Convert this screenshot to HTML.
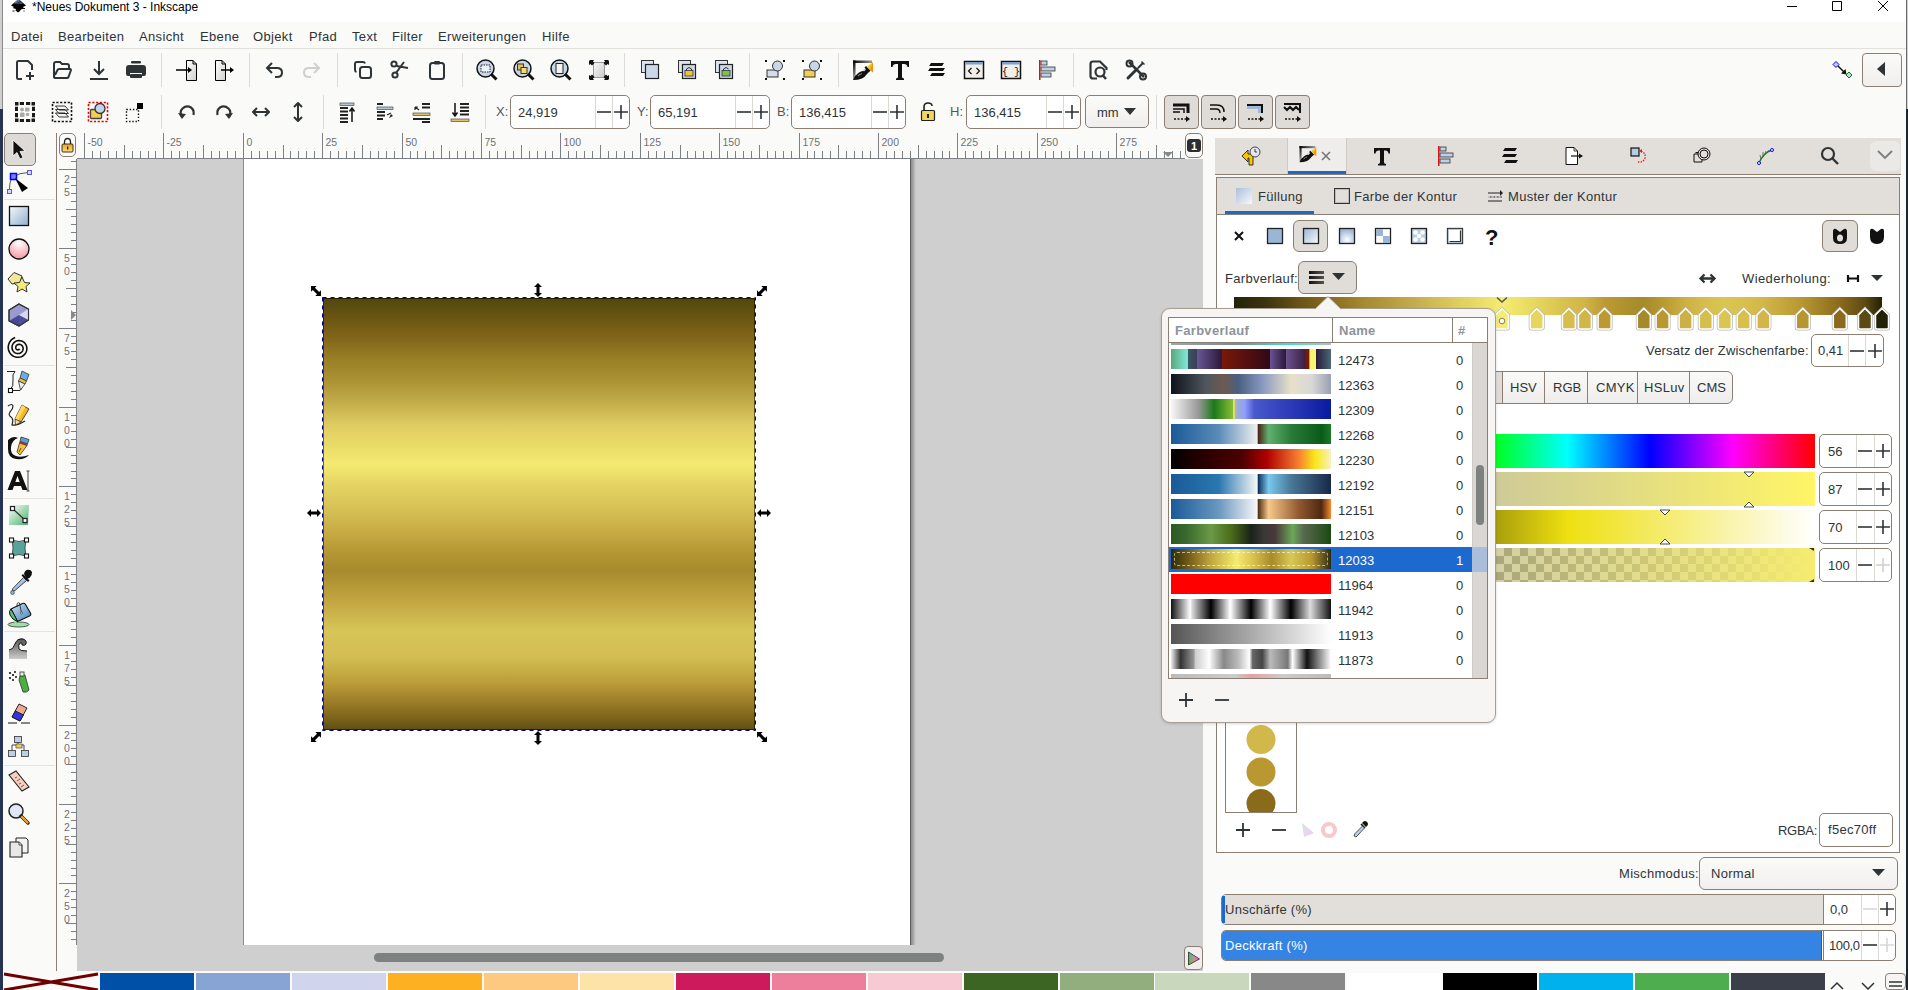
<!DOCTYPE html><html><head><meta charset="utf-8"><style>
html,body{margin:0;padding:0;width:1908px;height:990px;overflow:hidden;background:#fafaf9;font-family:"Liberation Sans", sans-serif;}
body{position:relative}
svg{overflow:visible}
</style></head><body>
<div style="position:absolute;left:0px;top:0px;width:1908px;height:22px;background:#ffffff"></div>
<svg style="position:absolute;left:10px;top:-2px;" width="18" height="17" viewBox="0 0 18 17"><defs><linearGradient id="ik" x1="0" y1="0" x2="1" y2="1"><stop offset="0" stop-color="#fff"/><stop offset="0.6" stop-color="#20385e"/><stop offset="1" stop-color="#5a7ab0"/></linearGradient></defs><path d="M8.5 1L1 7.5L4 9L2.5 10L6 11L5.5 12.5L8 14.5L10 13L11 11.5L14 10.5L13 9L16 7.5Z" fill="#000"/><path d="M8.5 1L4 5.5Q8 7 13 5.5Z" fill="url(#ik)"/><rect x="2.5" y="12.5" width="2" height="1" fill="#111"/><rect x="13" y="10" width="2" height="1" fill="#111"/><rect x="13.5" y="12.5" width="1" height="1" fill="#111"/></svg>
<div style="position:absolute;left:32px;top:0px;font-size:12px;line-height:14px;color:#000;white-space:nowrap;">*Neues Dokument 3 - Inkscape</div>
<svg style="position:absolute;left:1786px;top:0px;" width="120" height="20" viewBox="0 0 120 20"><path d="M1 6.5H11" stroke="#000" stroke-width="1"/><path d="M46.5 1.5h9v9h-9z" fill="none" stroke="#000" stroke-width="1"/><path d="M92 1L102 11M102 1L92 11" stroke="#000" stroke-width="1"/></svg>
<div style="position:absolute;left:3px;top:48px;width:1903px;height:1px;background:#e4e1dd"></div>
<div style="position:absolute;left:11px;top:29px;font-size:13px;line-height:15px;color:#2e3436;white-space:nowrap;letter-spacing:0.35px">Datei</div>
<div style="position:absolute;left:58px;top:29px;font-size:13px;line-height:15px;color:#2e3436;white-space:nowrap;letter-spacing:0.35px">Bearbeiten</div>
<div style="position:absolute;left:139px;top:29px;font-size:13px;line-height:15px;color:#2e3436;white-space:nowrap;letter-spacing:0.35px">Ansicht</div>
<div style="position:absolute;left:200px;top:29px;font-size:13px;line-height:15px;color:#2e3436;white-space:nowrap;letter-spacing:0.35px">Ebene</div>
<div style="position:absolute;left:253px;top:29px;font-size:13px;line-height:15px;color:#2e3436;white-space:nowrap;letter-spacing:0.35px">Objekt</div>
<div style="position:absolute;left:309px;top:29px;font-size:13px;line-height:15px;color:#2e3436;white-space:nowrap;letter-spacing:0.35px">Pfad</div>
<div style="position:absolute;left:352px;top:29px;font-size:13px;line-height:15px;color:#2e3436;white-space:nowrap;letter-spacing:0.35px">Text</div>
<div style="position:absolute;left:392px;top:29px;font-size:13px;line-height:15px;color:#2e3436;white-space:nowrap;letter-spacing:0.35px">Filter</div>
<div style="position:absolute;left:438px;top:29px;font-size:13px;line-height:15px;color:#2e3436;white-space:nowrap;letter-spacing:0.35px">Erweiterungen</div>
<div style="position:absolute;left:542px;top:29px;font-size:13px;line-height:15px;color:#2e3436;white-space:nowrap;letter-spacing:0.35px">Hilfe</div>
<svg style="position:absolute;left:13.0px;top:58.0px;" width="24" height="24" viewBox="0 0 24 24"><path d="M9 21H5.5Q4 21 4 19.5V4.5Q4 3 5.5 3H15L19 7V12" fill="none" stroke="#2e3436" stroke-width="2" stroke-linejoin="round"/><path d="M17 14V22M13 18H21" fill="none" stroke="#2e3436" stroke-width="2"/></svg>
<svg style="position:absolute;left:50.0px;top:58.0px;" width="24" height="24" viewBox="0 0 24 24"><path d="M4 19V6Q4 4 6 4H10L12 6H17Q19 6 19 8V10" fill="none" stroke="#2e3436" stroke-width="2"/><path d="M4 19Q4 20 6 20H17Q18 20 18.5 19L21 12Q21 11 20 11H9Q8 11 7.5 12L5 17" fill="none" stroke="#2e3436" stroke-width="2" stroke-linejoin="round"/></svg>
<svg style="position:absolute;left:87.0px;top:58.0px;" width="24" height="24" viewBox="0 0 24 24"><path d="M12 3V16M7 11L12 16L17 11" fill="none" stroke="#2e3436" stroke-width="2"/><path d="M3 21H21" fill="none" stroke="#2e3436" stroke-width="2"/></svg>
<svg style="position:absolute;left:124.0px;top:58.0px;" width="24" height="24" viewBox="0 0 24 24"><rect x="7" y="3" width="10" height="2.5" rx="1" fill="#2e3436"/><path d="M5 7H19Q22 7 22 10V16Q22 18 20 18H18V15H6V18H4Q2 18 2 16V10Q2 7 5 7Z" fill="#2e3436"/><rect x="6" y="16" width="12" height="4" rx="1" fill="#2e3436"/></svg>
<div style="position:absolute;left:161px;top:53px;width:1px;height:34px;background:#dedbd7"></div>
<svg style="position:absolute;left:175.0px;top:58.0px;" width="24" height="24" viewBox="0 0 24 24"><defs><linearGradient id="pg1" x1="0" y1="0" x2="1" y2="1"><stop offset="0" stop-color="#fff"/><stop offset="1" stop-color="#d0d0cc"/></linearGradient></defs><path d="M11.5 2.5H18L21.5 6V22.5H11.5Z" fill="url(#pg1)" stroke="#000" stroke-width="1"/><path d="M18 2.5V6H21.5" fill="none" stroke="#000" stroke-width="1"/><path d="M1 12H14" stroke="#000" stroke-width="1.5"/><path d="M13 9L17 12L13 15Z" fill="#000"/></svg>
<svg style="position:absolute;left:212.0px;top:58.0px;" width="24" height="24" viewBox="0 0 24 24"><path d="M3.5 2.5H10L13.5 6V22.5H3.5Z" fill="url(#pg1)" stroke="#000" stroke-width="1"/><path d="M10 2.5V6H13.5" fill="none" stroke="#000" stroke-width="1"/><path d="M9 12H19" stroke="#000" stroke-width="1.5"/><path d="M18 9L22 12L18 15Z" fill="#000"/></svg>
<div style="position:absolute;left:249px;top:53px;width:1px;height:34px;background:#dedbd7"></div>
<svg style="position:absolute;left:263.0px;top:58.0px;" width="24" height="24" viewBox="0 0 24 24"><path d="M5 10H14Q19 10 19 14.5Q19 19 14 19H12" fill="none" stroke="#2e3436" stroke-width="2"/><path d="M9 5L4 10L9 15" fill="none" stroke="#2e3436" stroke-width="2"/></svg>
<svg style="position:absolute;left:299.0px;top:58.0px;" width="24" height="24" viewBox="0 0 24 24"><path d="M19 10H10Q5 10 5 14.5Q5 19 10 19H12" fill="none" stroke="#cfd0ce" stroke-width="2"/><path d="M15 5L20 10L15 15" fill="none" stroke="#cfd0ce" stroke-width="2"/></svg>
<div style="position:absolute;left:337px;top:53px;width:1px;height:34px;background:#dedbd7"></div>
<svg style="position:absolute;left:351.0px;top:58.0px;" width="24" height="24" viewBox="0 0 24 24"><rect x="9" y="9" width="11" height="11" rx="2.5" fill="none" stroke="#2e3436" stroke-width="2"/><path d="M14 5.5Q13.5 4 12 4H6Q4 4 4 6V12Q4 13.5 5.5 14" fill="none" stroke="#2e3436" stroke-width="2"/></svg>
<svg style="position:absolute;left:387.0px;top:58.0px;" width="24" height="24" viewBox="0 0 24 24"><circle cx="8" cy="17" r="2.6" fill="none" stroke="#2e3436" stroke-width="2"/><circle cx="7" cy="6" r="2.6" fill="none" stroke="#2e3436" stroke-width="2"/><path d="M9 15L17 4M9.5 8L21 10" fill="none" stroke="#2e3436" stroke-width="2"/></svg>
<svg style="position:absolute;left:425.0px;top:58.0px;" width="24" height="24" viewBox="0 0 24 24"><rect x="5" y="5" width="14" height="16" rx="2.5" fill="none" stroke="#2e3436" stroke-width="2"/><rect x="9" y="3" width="6" height="3.5" rx="1" fill="#2e3436"/></svg>
<div style="position:absolute;left:462px;top:53px;width:1px;height:34px;background:#dedbd7"></div>
<svg style="position:absolute;left:475.0px;top:58.0px;" width="24" height="24" viewBox="0 0 24 24"><circle cx="10.5" cy="10.5" r="8.5" fill="#c9d6e6" stroke="#111" stroke-width="1.5"/><rect x="6" y="7" width="9" height="7" fill="#eef2f7" stroke="#222" stroke-width="1" stroke-dasharray="1.5 1"/><path d="M16 16L21.5 21.5" stroke="#111" stroke-width="3"/></svg>
<svg style="position:absolute;left:512.0px;top:58.0px;" width="24" height="24" viewBox="0 0 24 24"><circle cx="10.5" cy="10.5" r="8.5" fill="#c9d6e6" stroke="#111" stroke-width="1.5"/><rect x="5.5" y="6" width="6" height="6" fill="#e6c25a" stroke="#333" stroke-width="1"/><rect x="9" y="9.5" width="6" height="6" fill="#f2dc6c" stroke="#333" stroke-width="1"/><path d="M16 16L21.5 21.5" stroke="#111" stroke-width="3"/></svg>
<svg style="position:absolute;left:549.0px;top:58.0px;" width="24" height="24" viewBox="0 0 24 24"><circle cx="10.5" cy="10.5" r="8.5" fill="#c9d6e6" stroke="#111" stroke-width="1.5"/><rect x="7" y="5.5" width="7" height="10" fill="#f4f4f4" stroke="#222" stroke-width="1"/><path d="M16 16L21.5 21.5" stroke="#111" stroke-width="3"/></svg>
<svg style="position:absolute;left:587.0px;top:58.0px;" width="24" height="24" viewBox="0 0 24 24"><defs><linearGradient id="zp" x1="0" y1="0" x2="1" y2="1"><stop offset="0" stop-color="#fafafa"/><stop offset="1" stop-color="#c8c8c8"/></linearGradient></defs><rect x="6.5" y="4.5" width="11" height="15" fill="url(#zp)" stroke="#999" stroke-width="1"/><path d="M3 2H7L6 3.5L7.5 5L5 7.5L3.5 6L2 7V3Z" fill="#111"/><path d="M21 2H17L18 3.5L16.5 5L19 7.5L20.5 6L22 7V3Z" fill="#111"/><path d="M3 22H7L6 20.5L7.5 19L5 16.5L3.5 18L2 17V21Z" fill="#111"/><path d="M21 22H17L18 20.5L16.5 19L19 16.5L20.5 18L22 17V21Z" fill="#111"/></svg>
<div style="position:absolute;left:624px;top:53px;width:1px;height:34px;background:#dedbd7"></div>
<svg style="position:absolute;left:638.0px;top:58.0px;" width="24" height="24" viewBox="0 0 24 24"><rect x="3.5" y="2.5" width="12" height="12" fill="#dbe4ef" stroke="#333" stroke-width="1"/><rect x="7.5" y="6.5" width="13" height="14" fill="#cad8ea" stroke="#222" stroke-width="1.2"/></svg>
<svg style="position:absolute;left:675.0px;top:58.0px;" width="24" height="24" viewBox="0 0 24 24"><rect x="3.5" y="2.5" width="12" height="12" fill="#dbe4ef" stroke="#333" stroke-width="1"/><rect x="7.5" y="6.5" width="13" height="14" fill="#cad8ea" stroke="#222" stroke-width="1.2"/><rect x="10" y="12.5" width="8" height="5.5" fill="#f4c430" stroke="#333" stroke-width="0.8"/><path d="M11.5 12.5V11Q14 8 16.5 11V12.5" fill="none" stroke="#333" stroke-width="1"/></svg>
<svg style="position:absolute;left:712.0px;top:58.0px;" width="24" height="24" viewBox="0 0 24 24"><rect x="3.5" y="2.5" width="12" height="12" fill="#dbe4ef" stroke="#333" stroke-width="1"/><rect x="7.5" y="6.5" width="13" height="14" fill="#cad8ea" stroke="#222" stroke-width="1.2"/><rect x="10" y="12.5" width="8" height="5.5" fill="#7fbf4e" stroke="#333" stroke-width="0.8"/><path d="M11.5 12.5V11Q14 8 16.5 11" fill="none" stroke="#333" stroke-width="1"/></svg>
<div style="position:absolute;left:749px;top:53px;width:1px;height:34px;background:#dedbd7"></div>
<svg style="position:absolute;left:763.0px;top:58.0px;" width="24" height="24" viewBox="0 0 24 24"><path d="M2 2h2v2H2zM20 2h2v2h-2zM2 20h2v2H2zM20 20h2v2h-2z" fill="#111"/><rect x="4" y="12" width="11" height="7" fill="#d4deea" stroke="#333" stroke-width="1"/><circle cx="14.5" cy="8" r="5" fill="#c9d6e6" stroke="#333" stroke-width="1"/></svg>
<svg style="position:absolute;left:800.0px;top:58.0px;" width="24" height="24" viewBox="0 0 24 24"><path d="M2 2h2v2H2zM20 2h2v2h-2zM2 20h2v2H2zM20 20h2v2h-2z" fill="#111"/><rect x="4" y="12" width="11" height="7" fill="#f1cf52" stroke="#333" stroke-width="1"/><circle cx="14.5" cy="8" r="5" fill="#c9d6e6" stroke="#333" stroke-width="1"/></svg>
<div style="position:absolute;left:838px;top:53px;width:1px;height:34px;background:#dedbd7"></div>
<svg style="position:absolute;left:850.0px;top:58.0px;" width="24" height="24" viewBox="0 0 24 24"><defs><linearGradient id="fsA" x1="0" y1="0" x2="1" y2="0"><stop offset="0" stop-color="#000"/><stop offset="1" stop-color="#999"/></linearGradient><linearGradient id="fsB" x1="0" y1="0" x2="0" y2="1"><stop offset="0" stop-color="#000"/><stop offset="1" stop-color="#aaa"/></linearGradient></defs><rect x="3" y="2.5" width="19" height="2.5" fill="url(#fsA)"/><rect x="3" y="2.5" width="2.5" height="19" fill="url(#fsB)"/><path d="M3 22Q5 17 9 14.5Q11 13 13 13L16 10L19.5 13.5L16.5 16.5Q15 19 12 20.5Q8 22 3 22Z" fill="#111"/><path d="M8 18Q10 16 12 15.5" stroke="#888" stroke-width="1.2" fill="none"/><path d="M13.5 13L15.5 11" stroke="#ddd" stroke-width="1.2"/><path d="M16 8L20.5 12.5L19 14L14.5 9.5Z" fill="#111"/><path d="M17 9L23 4V14.5Z" fill="#f6c21e"/><path d="M23 4V14.5L20 12Z" fill="#f09010"/></svg>
<svg style="position:absolute;left:888.0px;top:58.0px;" width="24" height="24" viewBox="0 0 24 24"><path d="M3 3H21V9H19.5Q19 6 16 6H14V19Q14 20 16 20.5V22H8V20.5Q10 20 10 19V6H8Q5 6 4.5 9H3Z" fill="#111"/></svg>
<svg style="position:absolute;left:925.0px;top:58.0px;" width="24" height="24" viewBox="0 0 24 24"><path d="M6 5H19L17 8H4Z" fill="#111"/><path d="M5 10H20L18 13H3Z" fill="#111"/><path d="M7 15H20L18 18H5Z" fill="#111"/></svg>
<svg style="position:absolute;left:962.0px;top:58.0px;" width="24" height="24" viewBox="0 0 24 24"><rect x="2.5" y="3.5" width="19" height="17" fill="#f0efea" stroke="#111" stroke-width="1.5"/><rect x="3" y="4" width="18" height="2.5" fill="#7fa0c8"/><path d="M9.5 10L6.5 13L9.5 16M14.5 10L17.5 13L14.5 16" fill="none" stroke="#111" stroke-width="1.2"/></svg>
<svg style="position:absolute;left:999.0px;top:58.0px;" width="24" height="24" viewBox="0 0 24 24"><rect x="2.5" y="3.5" width="19" height="17" fill="#f0efea" stroke="#111" stroke-width="1.5"/><rect x="3" y="4" width="18" height="2.5" fill="#7fa0c8"/><text x="12" y="17" font-size="10" text-anchor="middle" font-family="Liberation Mono" fill="#111">{ }</text></svg>
<svg style="position:absolute;left:1036.0px;top:58.0px;" width="24" height="24" viewBox="0 0 24 24"><rect x="3" y="2" width="1.5" height="20" fill="#d11"/><rect x="5" y="3" width="6" height="4" fill="#bcd0e8" stroke="#333" stroke-width="0.8"/><rect x="5" y="9" width="14" height="4" fill="#bcd0e8" stroke="#333" stroke-width="0.8"/><rect x="5" y="15" width="10" height="4" fill="#bcd0e8" stroke="#333" stroke-width="0.8"/></svg>
<div style="position:absolute;left:1073px;top:53px;width:1px;height:34px;background:#dedbd7"></div>
<svg style="position:absolute;left:1087.0px;top:58.0px;" width="24" height="24" viewBox="0 0 24 24"><path d="M10 20.5H6Q3.5 20.5 3.5 18V6Q3.5 3.5 6 3.5H13L19.5 10V12" fill="none" stroke="#2e3436" stroke-width="2.2"/><circle cx="13" cy="14" r="4.5" fill="none" stroke="#2e3436" stroke-width="2.2"/><path d="M15.5 17L19 21" stroke="#2e3436" stroke-width="2.5"/></svg>
<svg style="position:absolute;left:1124.0px;top:58.0px;" width="24" height="24" viewBox="0 0 24 24"><path d="M4 20L13 11" stroke="#2e3436" stroke-width="3" stroke-linecap="round"/><path d="M14 10L19 5" stroke="#2e3436" stroke-width="2"/><path d="M18 3L21 6L20 7L17 4Z" fill="#2e3436"/><path d="M5 4L20 19" stroke="#2e3436" stroke-width="2.5"/><circle cx="5.5" cy="5.5" r="3" fill="none" stroke="#2e3436" stroke-width="2"/><circle cx="19" cy="18.5" r="3" fill="none" stroke="#2e3436" stroke-width="2"/></svg>
<svg style="position:absolute;left:1832.0px;top:59.0px;" width="22" height="22" viewBox="0 0 22 22"><path d="M4 2.5L7 5.5L4 8.5L1 5.5Z" fill="#c8c8ff" stroke="#00f" stroke-width="1"/><path d="M6 7L12 13" stroke="#111" stroke-width="1.4"/><path d="M14.5 15.5L9 14.5L13.5 10Z" fill="#111"/><path d="M17 13L20 16L17 19L14 16Z" fill="#c8c8ff" stroke="#080" stroke-width="1"/></svg>
<div style="position:absolute;left:1862px;top:53px;width:38px;height:32px;background:linear-gradient(#fafaf9,#f0efed);border:1px solid #8b7f73;border-radius:4px"></div>
<svg style="position:absolute;left:1874px;top:62px;" width="14" height="14" viewBox="0 0 14 14"><path d="M11 0L3 7L11 14Z" fill="#2e3436"/></svg>
<svg style="position:absolute;left:13.0px;top:100.0px;" width="24" height="24" viewBox="0 0 24 24"><path d="M2 2h3.5v3.5H2zM18.5 2H22v3.5h-3.5zM2 18.5h3.5V22H2zM18.5 18.5H22V22h-3.5z" fill="#1a1a1a"/><path d="M6.8 2h4.2v3H6.8zM13 2h4.2v3H13zM6.8 19h4.2v3H6.8zM13 19h4.2v3H13zM2 6.8h3V11H2zM2 13h3v4.2H2zM19 6.8h3V11h-3zM19 13h3v4.2h-3z" fill="#1a1a1a"/><circle cx="9" cy="9.5" r="2" fill="#aaa"/><rect x="12" y="7.5" width="4.5" height="4" rx="1" fill="#aaa"/><rect x="7" y="12.5" width="4.5" height="4.5" rx="1" fill="#aaa"/><circle cx="14.5" cy="14.5" r="1.8" fill="#aaa"/></svg>
<svg style="position:absolute;left:50.0px;top:100.0px;" width="24" height="24" viewBox="0 0 24 24"><rect x="2.5" y="2.5" width="19" height="19" fill="none" stroke="#111" stroke-width="1.6" stroke-dasharray="2.2 1.6"/><path d="M5.5 6H15L18.5 10H9ZM5.5 9.5H15L18.5 13.5H9ZM5.5 13H15L18.5 17H9Z" fill="#f4f4f4" stroke="#222" stroke-width="0.9" stroke-linejoin="round"/></svg>
<svg style="position:absolute;left:86.0px;top:100.0px;" width="24" height="24" viewBox="0 0 24 24"><rect x="2.5" y="2.5" width="19" height="19" fill="none" stroke="#e00" stroke-width="1.6" stroke-dasharray="2.2 1.6"/><rect x="4.5" y="9.5" width="11" height="9" rx="1" fill="#f2cf52" stroke="#444" stroke-width="1.3"/><circle cx="14" cy="8.5" r="5" fill="#c4d4e8" stroke="#333" stroke-width="1.3"/></svg>
<svg style="position:absolute;left:123.0px;top:100.0px;" width="24" height="24" viewBox="0 0 24 24"><rect x="3.5" y="9.5" width="12" height="12" fill="none" stroke="#111" stroke-width="1.4" stroke-dasharray="1.4 1.8"/><rect x="14" y="3" width="6" height="6" fill="#000"/></svg>
<div style="position:absolute;left:161px;top:95px;width:1px;height:34px;background:#dedbd7"></div>
<svg style="position:absolute;left:175.0px;top:100.0px;" width="24" height="24" viewBox="0 0 24 24"><path d="M7 17Q4 12 7.5 8.5Q11.5 5 16 7.5Q19.5 10 18.5 15" fill="none" stroke="#2e3436" stroke-width="2.2"/><path d="M3 13L7 19L11 14Z" fill="#2e3436"/></svg>
<svg style="position:absolute;left:212.0px;top:100.0px;" width="24" height="24" viewBox="0 0 24 24"><path d="M17 17Q20 12 16.5 8.5Q12.5 5 8 7.5Q4.5 10 5.5 15" fill="none" stroke="#2e3436" stroke-width="2.2"/><path d="M21 13L17 19L13 14Z" fill="#2e3436"/></svg>
<svg style="position:absolute;left:249.0px;top:100.0px;" width="24" height="24" viewBox="0 0 24 24"><path d="M4 12H20M8 8L4 12L8 16M16 8L20 12L16 16" fill="none" stroke="#2e3436" stroke-width="2" stroke-linejoin="round"/></svg>
<svg style="position:absolute;left:286.0px;top:100.0px;" width="24" height="24" viewBox="0 0 24 24"><path d="M12 3V21M8 7L12 3L16 7M8 17L12 21L16 17" fill="none" stroke="#2e3436" stroke-width="2" stroke-linejoin="round"/></svg>
<div style="position:absolute;left:323px;top:95px;width:1px;height:34px;background:#dedbd7"></div>
<svg style="position:absolute;left:337.0px;top:100.0px;" width="24" height="24" viewBox="0 0 24 24"><rect x="3" y="3" width="14" height="2.5" fill="#b8c8d8" stroke="#333" stroke-width="0.6"/><path d="M3 8H11M3 11.5H11M3 15H11M3 18.5H11M3 22H11" stroke="#222" stroke-width="2"/><path d="M15 22V9M12.5 11.5L15 8L17.5 11.5" fill="none" stroke="#111" stroke-width="1.5"/></svg>
<svg style="position:absolute;left:373.5px;top:100.0px;" width="24" height="24" viewBox="0 0 24 24"><path d="M3 4H9M3 15.5H11M3 19H9" stroke="#222" stroke-width="2"/><rect x="3" y="7" width="16" height="2.5" fill="#b8c8d8" stroke="#333" stroke-width="0.6"/><path d="M3 12H11" stroke="#222" stroke-width="2"/><path d="M15 18L17 14L19 16Z" fill="#222"/><path d="M13 15L17 13" stroke="#222" stroke-width="1.2"/></svg>
<svg style="position:absolute;left:410.0px;top:100.0px;" width="24" height="24" viewBox="0 0 24 24"><path d="M12 4H20M12 7.5H20M3 19H20M12 22H20" stroke="#222" stroke-width="2"/><rect x="3" y="13" width="17" height="2.5" fill="#e3c46a" stroke="#333" stroke-width="0.6"/><path d="M9 10L5 7M5 7V10M5 7H8" stroke="#222" stroke-width="1.2" fill="none"/></svg>
<svg style="position:absolute;left:448.0px;top:100.0px;" width="24" height="24" viewBox="0 0 24 24"><path d="M12 4H21M12 7.5H21M12 11H21M12 14.5H21" stroke="#222" stroke-width="2"/><rect x="3" y="19" width="18" height="2.5" fill="#e3c46a" stroke="#333" stroke-width="0.6"/><path d="M7 3V15M4.5 12.5L7 16L9.5 12.5" fill="none" stroke="#111" stroke-width="1.5"/></svg>
<div style="position:absolute;left:485px;top:95px;width:1px;height:34px;background:#dedbd7"></div>
<div style="position:absolute;left:496px;top:104px;font-size:13px;line-height:15px;color:#555753;white-space:nowrap;">X:</div>
<div style="position:absolute;left:510px;top:95px;width:118px;height:32px;background:#fff;border:1px solid #8b7f73;border-radius:5px"></div>
<div style="position:absolute;left:595px;top:96px;width:1px;height:32px;background:#dcd8d4"></div>
<div style="position:absolute;left:612px;top:96px;width:1px;height:32px;background:#dcd8d4"></div>
<div style="position:absolute;left:518px;top:104.5px;font-size:13px;line-height:15px;color:#2e3436;white-space:nowrap;">24,919</div>
<svg style="position:absolute;left:596.5px;top:105.0px;" width="14" height="14" viewBox="0 0 14 14"><path d="M0 7H14" stroke="#2e3436" stroke-width="1.6"/></svg>
<svg style="position:absolute;left:614.0px;top:105.0px;" width="14" height="14" viewBox="0 0 14 14"><path d="M0 7H14M7 0V14" stroke="#2e3436" stroke-width="1.6"/></svg>
<div style="position:absolute;left:637px;top:104px;font-size:13px;line-height:15px;color:#555753;white-space:nowrap;">Y:</div>
<div style="position:absolute;left:650px;top:95px;width:118px;height:32px;background:#fff;border:1px solid #8b7f73;border-radius:5px"></div>
<div style="position:absolute;left:735px;top:96px;width:1px;height:32px;background:#dcd8d4"></div>
<div style="position:absolute;left:752px;top:96px;width:1px;height:32px;background:#dcd8d4"></div>
<div style="position:absolute;left:658px;top:104.5px;font-size:13px;line-height:15px;color:#2e3436;white-space:nowrap;">65,191</div>
<svg style="position:absolute;left:736.5px;top:105.0px;" width="14" height="14" viewBox="0 0 14 14"><path d="M0 7H14" stroke="#2e3436" stroke-width="1.6"/></svg>
<svg style="position:absolute;left:754.0px;top:105.0px;" width="14" height="14" viewBox="0 0 14 14"><path d="M0 7H14M7 0V14" stroke="#2e3436" stroke-width="1.6"/></svg>
<div style="position:absolute;left:777px;top:104px;font-size:13px;line-height:15px;color:#555753;white-space:nowrap;">B:</div>
<div style="position:absolute;left:791px;top:95px;width:113px;height:32px;background:#fff;border:1px solid #8b7f73;border-radius:5px"></div>
<div style="position:absolute;left:871px;top:96px;width:1px;height:32px;background:#dcd8d4"></div>
<div style="position:absolute;left:888px;top:96px;width:1px;height:32px;background:#dcd8d4"></div>
<div style="position:absolute;left:799px;top:104.5px;font-size:13px;line-height:15px;color:#2e3436;white-space:nowrap;">136,415</div>
<svg style="position:absolute;left:872.5px;top:105.0px;" width="14" height="14" viewBox="0 0 14 14"><path d="M0 7H14" stroke="#2e3436" stroke-width="1.6"/></svg>
<svg style="position:absolute;left:890.0px;top:105.0px;" width="14" height="14" viewBox="0 0 14 14"><path d="M0 7H14M7 0V14" stroke="#2e3436" stroke-width="1.6"/></svg>
<div style="position:absolute;left:950px;top:104px;font-size:13px;line-height:15px;color:#555753;white-space:nowrap;">H:</div>
<div style="position:absolute;left:966px;top:95px;width:113px;height:32px;background:#fff;border:1px solid #8b7f73;border-radius:5px"></div>
<div style="position:absolute;left:1046px;top:96px;width:1px;height:32px;background:#dcd8d4"></div>
<div style="position:absolute;left:1063px;top:96px;width:1px;height:32px;background:#dcd8d4"></div>
<div style="position:absolute;left:974px;top:104.5px;font-size:13px;line-height:15px;color:#2e3436;white-space:nowrap;">136,415</div>
<svg style="position:absolute;left:1047.5px;top:105.0px;" width="14" height="14" viewBox="0 0 14 14"><path d="M0 7H14" stroke="#2e3436" stroke-width="1.6"/></svg>
<svg style="position:absolute;left:1065.0px;top:105.0px;" width="14" height="14" viewBox="0 0 14 14"><path d="M0 7H14M7 0V14" stroke="#2e3436" stroke-width="1.6"/></svg>
<svg style="position:absolute;left:919px;top:101px;" width="18" height="22" viewBox="0 0 18 22"><path d="M5 10V6Q5 2 9 2Q13 2 13 5" fill="none" stroke="#222" stroke-width="1.6"/><rect x="2.5" y="9.5" width="13" height="10" rx="1" fill="#f2d55c" stroke="#222" stroke-width="1.2"/><rect x="8" y="13" width="2" height="4" fill="#222"/></svg>
<div style="position:absolute;left:1085px;top:95px;width:62px;height:31px;background:linear-gradient(#fbfbfa,#efeeec);border:1px solid #8b7f73;border-radius:5px"></div>
<div style="position:absolute;left:1097px;top:105px;font-size:13px;line-height:15px;color:#2e3436;white-space:nowrap;">mm</div>
<svg style="position:absolute;left:1124px;top:108px;" width="12" height="8" viewBox="0 0 12 8"><path d="M0 0H12L6 7Z" fill="#2e3436"/></svg>
<div style="position:absolute;left:1156px;top:95px;width:1px;height:34px;background:#dedbd7"></div>
<div style="position:absolute;left:1164px;top:95px;width:33px;height:32px;background:#dfdbd7;border:1px solid #8b7f73;border-radius:4px"></div>
<div style="position:absolute;left:1201px;top:95px;width:33px;height:32px;background:#dfdbd7;border:1px solid #8b7f73;border-radius:4px"></div>
<div style="position:absolute;left:1238px;top:95px;width:33px;height:32px;background:#dfdbd7;border:1px solid #8b7f73;border-radius:4px"></div>
<div style="position:absolute;left:1275px;top:95px;width:33px;height:32px;background:#dfdbd7;border:1px solid #8b7f73;border-radius:4px"></div>
<svg style="position:absolute;left:1170px;top:101px;" width="24" height="24" viewBox="0 0 24 24"><path d="M3 4H18V12" fill="none" stroke="#111" stroke-width="3"/><path d="M3 8H14V12M3 11H10" fill="none" stroke="#111" stroke-width="1.5"/><path d="M4 18H16" stroke="#111" stroke-width="1.5" stroke-dasharray="2 1.5"/><path d="M16 15L20 18L16 21Z" fill="#111"/></svg>
<svg style="position:absolute;left:1207px;top:101px;" width="24" height="24" viewBox="0 0 24 24"><path d="M3 4H10Q17 4 17 11" fill="none" stroke="#111" stroke-width="1.5"/><path d="M3 8H9Q13 8 13 12" fill="none" stroke="#111" stroke-width="1.5"/><path d="M4 18H16" stroke="#111" stroke-width="1.5" stroke-dasharray="2 1.5"/><path d="M16 15L20 18L16 21Z" fill="#111"/></svg>
<svg style="position:absolute;left:1244px;top:101px;" width="24" height="24" viewBox="0 0 24 24"><path d="M3 4H18V12H14V8H3Z" fill="#9fb8d6"/><path d="M3 4H18V12" fill="none" stroke="#111" stroke-width="2"/><path d="M4 18H16" stroke="#111" stroke-width="1.5" stroke-dasharray="2 1.5"/><path d="M16 15L20 18L16 21Z" fill="#111"/></svg>
<svg style="position:absolute;left:1281px;top:101px;" width="24" height="24" viewBox="0 0 24 24"><path d="M3 3H19V12M3 6L6 9L9 6L12 9L15 6L18 9" fill="none" stroke="#111" stroke-width="2"/><path d="M4 18H16" stroke="#111" stroke-width="1.5" stroke-dasharray="2 1.5"/><path d="M16 15L20 18L16 21Z" fill="#111"/></svg>
<div style="position:absolute;left:56px;top:133px;width:1px;height:838px;background:#8b7f73"></div>
<div style="position:absolute;left:4px;top:199px;width:51px;height:1px;background:#e6e3df"></div>
<div style="position:absolute;left:4px;top:365px;width:51px;height:1px;background:#e6e3df"></div>
<div style="position:absolute;left:4px;top:498px;width:51px;height:1px;background:#e6e3df"></div>
<div style="position:absolute;left:4px;top:631px;width:51px;height:1px;background:#e6e3df"></div>
<div style="position:absolute;left:4px;top:765px;width:51px;height:1px;background:#e6e3df"></div>
<div style="position:absolute;left:4px;top:133px;width:32px;height:33px;background:#dedad6;border:1px solid #8b7f73;border-radius:5px;box-sizing:border-box"></div>
<svg style="position:absolute;left:7px;top:137px;" width="24" height="24" viewBox="0 0 24 24"><path d="M6 3L6 19L10 15.5L13 22L16 20.5L13 14.5L18 14Z" fill="#111" stroke="#fff" stroke-width="0.8"/></svg>
<svg style="position:absolute;left:7px;top:170px;" width="24" height="24" viewBox="0 0 24 24"><path d="M2.5 20Q2.5 9 6.5 6.5Q12 3 21 2.5" fill="none" stroke="#444" stroke-width="0.9"/><rect x="0.5" y="19.5" width="4" height="4" fill="#d8d8ff" stroke="#55f" stroke-width="1"/><rect x="20.5" y="0.5" width="4" height="4" fill="#d8d8ff" stroke="#55f" stroke-width="1"/><rect x="3.5" y="3.5" width="6" height="6" fill="#8080ff" stroke="#00f" stroke-width="1.5"/><path d="M8 8L21 18L15 22Z" fill="#000"/></svg>
<svg style="position:absolute;left:7px;top:204px;" width="24" height="24" viewBox="0 0 24 24"><defs><linearGradient id="gr1" x1="0" y1="0" x2="1" y2="1"><stop offset="0" stop-color="#f4f7fb"/><stop offset="1" stop-color="#8fb0d0"/></linearGradient></defs><rect x="2.5" y="2.5" width="19" height="19" fill="url(#gr1)" stroke="#111" stroke-width="1.3"/></svg>
<svg style="position:absolute;left:7px;top:237px;" width="24" height="24" viewBox="0 0 24 24"><defs><radialGradient id="gc1" cx="0.5" cy="0.2" r="0.9"><stop offset="0" stop-color="#fff"/><stop offset="1" stop-color="#f58a98"/></radialGradient></defs><circle cx="12" cy="12" r="10" fill="url(#gc1)" stroke="#111" stroke-width="1.3"/></svg>
<svg style="position:absolute;left:7px;top:270px;" width="24" height="24" viewBox="0 0 24 24"><path d="M1 9L7 2.5L15 6L13 13L5 14Z" fill="#f5e79a" stroke="#333" stroke-width="1"/><path d="M15 7L17.5 12.5L23 13L19 16.5L20 22L15 19L10 22L11 16.5L7 13L12.5 12.5Z" fill="#f6ea7a" stroke="#333" stroke-width="1"/></svg>
<svg style="position:absolute;left:7px;top:303px;" width="24" height="24" viewBox="0 0 24 24"><path d="M12 1L21.5 6V17L12 23L2 18V7Z" fill="#9a9ad0" stroke="#333" stroke-width="1.1"/><path d="M12 12L21.5 6V17L12 23Z" fill="#d8d8f4"/><path d="M12 12L2 18L12 23L21.5 17Z" fill="#3f3f8f" opacity="0.9"/><path d="M12 1L21.5 6V17L12 23L2 18V7Z" fill="none" stroke="#333" stroke-width="1.1"/></svg>
<svg style="position:absolute;left:7px;top:336px;" width="24" height="24" viewBox="0 0 24 24"><path d="M12.47 12.71 L12.43 12.89 L12.35 13.07 L12.24 13.24 L12.09 13.41 L11.92 13.55 L11.71 13.68 L11.48 13.77 L11.23 13.83 L10.96 13.86 L10.68 13.84 L10.39 13.78 L10.11 13.68 L9.84 13.53 L9.58 13.34 L9.34 13.10 L9.13 12.82 L8.96 12.51 L8.84 12.17 L8.76 11.80 L8.73 11.41 L8.76 11.01 L8.84 10.61 L8.99 10.22 L9.20 9.84 L9.46 9.48 L9.78 9.16 L10.15 8.88 L10.56 8.64 L11.02 8.46 L11.50 8.35 L12.01 8.30 L12.53 8.33 L13.05 8.43 L13.56 8.60 L14.05 8.85 L14.52 9.17 L14.94 9.55 L15.31 10.01 L15.63 10.51 L15.87 11.07 L16.04 11.67 L16.12 12.29 L16.12 12.93 L16.03 13.58 L15.84 14.21 L15.57 14.83 L15.21 15.41 L14.76 15.95 L14.24 16.42 L13.65 16.83 L13.00 17.15 L12.30 17.39 L11.56 17.53 L10.80 17.57 L10.03 17.50 L9.26 17.32 L8.52 17.04 L7.81 16.65 L7.16 16.17 L6.56 15.59 L6.05 14.92 L5.63 14.18 L5.31 13.38 L5.10 12.54 L5.00 11.66 L5.03 10.77 L5.18 9.87 L5.45 9.00 L5.85 8.16 L6.36 7.37 L6.98 6.65 L7.71 6.02 L8.52 5.49 L9.41 5.07 L10.35 4.77 L11.34 4.59 L12.36 4.56 L13.38 4.67 L14.39 4.92 L15.37 5.30 L16.29 5.82 L17.14 6.47 L17.91 7.24 L18.56 8.12 L19.10 9.08 L19.51 10.12 L19.77 11.22 L19.88 12.35 L19.83 13.50 L19.63 14.64 L19.27 15.76 L18.76 16.82 L18.10 17.82 L17.30 18.72 L16.38 19.51 L15.35 20.18 L14.23 20.70 L13.03 21.07 L11.79 21.28 L10.52 21.32 L9.25 21.18 L7.99 20.86 L6.78 20.37 L5.64 19.72 L4.59 18.91 L3.65 17.96 L2.84 16.88 L2.18 15.69 L1.69 14.41 L1.37 13.06 L1.24 11.68 L1.30 10.27 L1.55 8.88 L1.99 7.53 L2.62 6.23 L3.42 5.03 L4.39 3.93 L5.50 2.97 L6.75 2.17 L8.10 1.54" fill="none" stroke="#111" stroke-width="1.6"/></svg>
<svg style="position:absolute;left:7px;top:370px;" width="24" height="24" viewBox="0 0 24 24"><path d="M0 1.5H8Q5 4 6 10Q7 16 3 20" fill="none" stroke="#222" stroke-width="1"/><path d="M5 20.5H13L15 18" fill="none" stroke="#222" stroke-width="1"/><rect x="1.5" y="18.5" width="4" height="4" fill="#fff" stroke="#111" stroke-width="1.1"/><path d="M15 1L22 4.5L19.5 11L13 8Z" fill="#6aaee0" stroke="#333" stroke-width="0.8"/><path d="M13 8L19.5 11L18 14L11.5 11Z" fill="#f5c042" stroke="#333" stroke-width="0.8"/><path d="M11.5 11L18 14L13.5 20Z" fill="#eee" stroke="#333" stroke-width="0.8"/></svg>
<svg style="position:absolute;left:7px;top:403px;" width="24" height="24" viewBox="0 0 24 24"><path d="M1 3Q5 0 6 3Q6 6 3 9Q1 12 4 14Q7 16 5 22Q10 23 18 18" fill="none" stroke="#222" stroke-width="1.2"/><path d="M15 2L22 6L14 19L8 16Z" fill="#f6b820" stroke="#333" stroke-width="0.9"/><path d="M15 2L18.5 4L11 17.5L8 16Z" fill="#fcd860"/><path d="M8 16L14 19L8.5 22Z" fill="#f2deb0" stroke="#333" stroke-width="0.8"/></svg>
<svg style="position:absolute;left:7px;top:436px;" width="24" height="24" viewBox="0 0 24 24"><path d="M1 4Q6 -1 11 2Q5 4 4 11Q3 18 9 20Q14 22 22 19Q18 24 9 23Q1 22 1 13Q1 8 1 4Z" fill="#111"/><path d="M14 1L22 3.5L20.5 8L13 5.5Z" fill="#5aa0d8" stroke="#333" stroke-width="0.8"/><path d="M13 5.5L20.5 8L20 9.5L12.5 7Z" fill="#d33" stroke="#333" stroke-width="0.5"/><path d="M12.5 7L20 9.5L13 19L10 16Z" fill="#f6c030" stroke="#333" stroke-width="0.8"/><path d="M14 12L12 16" stroke="#333" stroke-width="0.8"/></svg>
<svg style="position:absolute;left:7px;top:469px;" width="24" height="24" viewBox="0 0 24 24"><path d="M0.5 21L8 2H13L20.5 21H15.5L14 17H7L5.5 21ZM8.3 13H12.7L10.5 7Z" fill="#111"/><path d="M21 2V22M19.5 2H22.5M19.5 22H22.5" stroke="#333" stroke-width="0.9" fill="none"/></svg>
<svg style="position:absolute;left:7px;top:503px;" width="24" height="24" viewBox="0 0 24 24"><defs><linearGradient id="gg1" x1="0" y1="0" x2="1" y2="1"><stop offset="0" stop-color="#fff"/><stop offset="1" stop-color="#48b068"/></linearGradient></defs><path d="M2 2H22L21 22H2Z" fill="url(#gg1)"/><path d="M6 6L18 17" stroke="#333" stroke-width="1.2"/><rect x="3.5" y="3.5" width="4" height="4" fill="#fff" stroke="#222" stroke-width="1.2"/><rect x="16" y="15.5" width="4" height="4" fill="#fff" stroke="#222" stroke-width="1.2"/></svg>
<svg style="position:absolute;left:7px;top:536px;" width="24" height="24" viewBox="0 0 24 24"><path d="M5 4Q12 7 19 4Q17 12 19 20Q12 17 5 20Q7 12 5 4Z" fill="#5aa39a" stroke="#333" stroke-width="0.8"/><rect x="2.5" y="2" width="4" height="4" fill="#fff" stroke="#111" stroke-width="1.1"/><rect x="17.5" y="2" width="4" height="4" fill="#fff" stroke="#111" stroke-width="1.1"/><rect x="2.5" y="18" width="4" height="4" fill="#fff" stroke="#111" stroke-width="1.1"/><rect x="17.5" y="18" width="4" height="4" fill="#fff" stroke="#111" stroke-width="1.1"/></svg>
<svg style="position:absolute;left:7px;top:569px;" width="26" height="26" viewBox="0 0 26 26"><defs><linearGradient id="dpg" x1="0" y1="0" x2="1" y2="1"><stop offset="0" stop-color="#dfeaf8"/><stop offset="1" stop-color="#6a98d0"/></linearGradient></defs><path d="M16.5 8.5L5.8 19.5L5.3 22.2L8 21.5L19.5 11.5Z" fill="url(#dpg)" stroke="#333" stroke-width="0.9"/><path d="M14.5 6.5L21 13L22.5 11.5L16 5Z" fill="#111"/><path d="M17 5Q17.5 1.5 20.5 0.8Q24 0.5 25 3Q25.5 6 22.5 9L19.5 10Z" fill="#111"/><ellipse cx="5.5" cy="23.5" rx="1.8" ry="2" fill="#8ab4e8" stroke="#333" stroke-width="0.7"/></svg>
<svg style="position:absolute;left:7px;top:602px;" width="26" height="26" viewBox="0 0 26 26"><defs><linearGradient id="bkg" x1="0" y1="0" x2="1" y2="1"><stop offset="0" stop-color="#cfe4f2"/><stop offset="1" stop-color="#3f7fc0"/></linearGradient></defs><ellipse cx="11.5" cy="22.5" rx="10.5" ry="2.5" fill="#9ee0a8" stroke="#333" stroke-width="0.8"/><path d="M8.5 16V22" stroke="#9ee0a8" stroke-width="2"/><path d="M4 7L15.5 1.5Q17.5 0.8 18.5 2.5L23.5 11Q24.5 13 22.5 14L10.5 19.5Z" fill="url(#bkg)" stroke="#111" stroke-width="1.1"/><path d="M4 7Q1.5 9 3 13Q5.5 18 10.5 19.5Q8 14 4 7Z" fill="#5cc070" stroke="#111" stroke-width="1"/><path d="M10 5Q9.5 -0.5 12.5 1L14.5 11" fill="none" stroke="#333" stroke-width="0.9"/><circle cx="14.5" cy="11" r="1" fill="#fff" stroke="#333" stroke-width="0.7"/></svg>
<svg style="position:absolute;left:7px;top:636px;" width="24" height="24" viewBox="0 0 24 24"><defs><linearGradient id="gt1" x1="0" y1="0" x2="0" y2="1"><stop offset="0" stop-color="#555"/><stop offset="1" stop-color="#ccc"/></linearGradient></defs><path d="M2 14Q6 14 8 8Q10 2 16 3Q20 4 19 8Q18 10 15 9Q16 6 13 7Q11 9 12 13Q13 15 20 15V23H2Z" fill="url(#gt1)"/><path d="M2 14Q6 14 8 8Q10 2 16 3Q20 4 19 8Q18 10 15 9Q16 6 13 7Q11 9 12 13Q13 15 20 15" fill="none" stroke="#111" stroke-width="1"/></svg>
<svg style="position:absolute;left:7px;top:670px;" width="24" height="24" viewBox="0 0 24 24"><path d="M13 6L18 5L22 20Q20 23 16 22L12 10Z" fill="#4ab040" stroke="#333" stroke-width="0.8"/><rect x="13" y="2" width="4" height="4" fill="#eee" stroke="#333" stroke-width="0.8"/><circle cx="3" cy="3" r="1.1" fill="#111"/><circle cx="6" cy="5" r="1.1" fill="#111"/><circle cx="3" cy="8" r="1.1" fill="#111"/><circle cx="8" cy="2" r="1" fill="#111"/><circle cx="9" cy="7" r="1" fill="#111"/><circle cx="6" cy="10" r="1" fill="#111"/></svg>
<svg style="position:absolute;left:7px;top:702px;" width="24" height="24" viewBox="0 0 24 24"><path d="M12 2L20 6L13 19L5 15Z" fill="#f0a890" stroke="#222" stroke-width="1"/><path d="M8.5 9L16.5 13L13 19L5 15Z" fill="#3333e0" stroke="#222" stroke-width="1"/><path d="M1 21H10M14 21H23" stroke="#111" stroke-width="1"/></svg>
<svg style="position:absolute;left:7px;top:735px;" width="24" height="24" viewBox="0 0 24 24"><path d="M11 7V10H5V15M11 10H17V15" fill="none" stroke="#333" stroke-width="0.9"/><rect x="7.5" y="1.5" width="7" height="6" fill="#b8d0ea" stroke="#333" stroke-width="0.8"/><rect x="9" y="9" width="6" height="4" fill="#f2cf52" stroke="#333" stroke-width="0.6"/><rect x="1.5" y="15.5" width="7" height="6" fill="#b8d0ea" stroke="#333" stroke-width="0.8"/><rect x="14.5" y="15.5" width="7" height="6" fill="#b8d0ea" stroke="#333" stroke-width="0.8"/></svg>
<svg style="position:absolute;left:7px;top:769px;" width="24" height="24" viewBox="0 0 24 24"><path d="M2 6L9 2L22 18L15 22Z" fill="#f4d0c0" stroke="#222" stroke-width="1.1"/><path d="M8 9L10 8M10 12L13 10M12 15L14 14M14 18L17 16" stroke="#822" stroke-width="0.8"/></svg>
<svg style="position:absolute;left:7px;top:802px;" width="24" height="24" viewBox="0 0 24 24"><circle cx="9" cy="9" r="7" fill="#dce8f4" stroke="#222" stroke-width="1.5"/><path d="M14 14L21 21" stroke="#222" stroke-width="3.5" stroke-linecap="round"/><path d="M15 15L20.5 20.5" stroke="#f0a020" stroke-width="2.4" stroke-linecap="round"/></svg>
<svg style="position:absolute;left:7px;top:835px;" width="24" height="24" viewBox="0 0 24 24"><path d="M9 3H19L21 5V18H9Z" fill="#f4f4f4" stroke="#222" stroke-width="1"/><path d="M3 7H12L15 10V22H3Z" fill="#e8e8e8" stroke="#222" stroke-width="1.1"/><path d="M12 7V10H15" fill="#fff" stroke="#222" stroke-width="0.8"/></svg>
<div style="position:absolute;left:59px;top:133px;width:17px;height:24px;background:#fafaf9;border:1px solid #8b7f73;border-radius:5px;box-sizing:border-box"></div>
<svg style="position:absolute;left:61px;top:137px;" width="13" height="16" viewBox="0 0 13 16"><path d="M3.5 7V5Q3.5 1.5 6.5 1.5Q9.5 1.5 9.5 5V7" fill="none" stroke="#222" stroke-width="1.3"/><defs><linearGradient id="lk" x1="0" y1="0" x2="0" y2="1"><stop offset="0" stop-color="#f0a020"/><stop offset="1" stop-color="#f8e070"/></linearGradient></defs><rect x="1" y="7" width="11" height="8" rx="1" fill="url(#lk)" stroke="#222" stroke-width="0.9"/><rect x="6" y="9.5" width="1.3" height="3" fill="#222"/></svg>
<svg style="position:absolute;left:77px;top:133px;overflow:hidden" width="1108" height="26" viewBox="0 0 1108 26"><rect x="0" y="25" width="1108" height="1" fill="#7c7f83"/><rect x="7.0" y="0" width="1" height="25" fill="#7c7f83"/><text x="10.5" y="13" font-size="10.5" fill="#6e7276" font-family="Liberation Sans">-50</text><rect x="15.0" y="18" width="1" height="7" fill="#7c7f83"/><rect x="23.0" y="18" width="1" height="7" fill="#7c7f83"/><rect x="31.0" y="18" width="1" height="7" fill="#7c7f83"/><rect x="39.0" y="18" width="1" height="7" fill="#7c7f83"/><rect x="47.0" y="12" width="1" height="13" fill="#7c7f83"/><rect x="55.0" y="18" width="1" height="7" fill="#7c7f83"/><rect x="63.0" y="18" width="1" height="7" fill="#7c7f83"/><rect x="71.0" y="18" width="1" height="7" fill="#7c7f83"/><rect x="78.0" y="18" width="1" height="7" fill="#7c7f83"/><rect x="86.0" y="0" width="1" height="25" fill="#7c7f83"/><text x="89.5" y="13" font-size="10.5" fill="#6e7276" font-family="Liberation Sans">-25</text><rect x="94.0" y="18" width="1" height="7" fill="#7c7f83"/><rect x="102.0" y="18" width="1" height="7" fill="#7c7f83"/><rect x="110.0" y="18" width="1" height="7" fill="#7c7f83"/><rect x="118.0" y="18" width="1" height="7" fill="#7c7f83"/><rect x="126.0" y="12" width="1" height="13" fill="#7c7f83"/><rect x="134.0" y="18" width="1" height="7" fill="#7c7f83"/><rect x="142.0" y="18" width="1" height="7" fill="#7c7f83"/><rect x="150.0" y="18" width="1" height="7" fill="#7c7f83"/><rect x="158.0" y="18" width="1" height="7" fill="#7c7f83"/><rect x="166.0" y="0" width="1" height="25" fill="#7c7f83"/><text x="169.5" y="13" font-size="10.5" fill="#6e7276" font-family="Liberation Sans">0</text><rect x="174.0" y="18" width="1" height="7" fill="#7c7f83"/><rect x="182.0" y="18" width="1" height="7" fill="#7c7f83"/><rect x="190.0" y="18" width="1" height="7" fill="#7c7f83"/><rect x="198.0" y="18" width="1" height="7" fill="#7c7f83"/><rect x="206.0" y="12" width="1" height="13" fill="#7c7f83"/><rect x="213.0" y="18" width="1" height="7" fill="#7c7f83"/><rect x="221.0" y="18" width="1" height="7" fill="#7c7f83"/><rect x="229.0" y="18" width="1" height="7" fill="#7c7f83"/><rect x="237.0" y="18" width="1" height="7" fill="#7c7f83"/><rect x="245.0" y="0" width="1" height="25" fill="#7c7f83"/><text x="248.5" y="13" font-size="10.5" fill="#6e7276" font-family="Liberation Sans">25</text><rect x="253.0" y="18" width="1" height="7" fill="#7c7f83"/><rect x="261.0" y="18" width="1" height="7" fill="#7c7f83"/><rect x="269.0" y="18" width="1" height="7" fill="#7c7f83"/><rect x="277.0" y="18" width="1" height="7" fill="#7c7f83"/><rect x="285.0" y="12" width="1" height="13" fill="#7c7f83"/><rect x="293.0" y="18" width="1" height="7" fill="#7c7f83"/><rect x="301.0" y="18" width="1" height="7" fill="#7c7f83"/><rect x="309.0" y="18" width="1" height="7" fill="#7c7f83"/><rect x="317.0" y="18" width="1" height="7" fill="#7c7f83"/><rect x="325.0" y="0" width="1" height="25" fill="#7c7f83"/><text x="328.5" y="13" font-size="10.5" fill="#6e7276" font-family="Liberation Sans">50</text><rect x="333.0" y="18" width="1" height="7" fill="#7c7f83"/><rect x="340.0" y="18" width="1" height="7" fill="#7c7f83"/><rect x="348.0" y="18" width="1" height="7" fill="#7c7f83"/><rect x="356.0" y="18" width="1" height="7" fill="#7c7f83"/><rect x="364.0" y="12" width="1" height="13" fill="#7c7f83"/><rect x="372.0" y="18" width="1" height="7" fill="#7c7f83"/><rect x="380.0" y="18" width="1" height="7" fill="#7c7f83"/><rect x="388.0" y="18" width="1" height="7" fill="#7c7f83"/><rect x="396.0" y="18" width="1" height="7" fill="#7c7f83"/><rect x="404.0" y="0" width="1" height="25" fill="#7c7f83"/><text x="407.5" y="13" font-size="10.5" fill="#6e7276" font-family="Liberation Sans">75</text><rect x="412.0" y="18" width="1" height="7" fill="#7c7f83"/><rect x="420.0" y="18" width="1" height="7" fill="#7c7f83"/><rect x="428.0" y="18" width="1" height="7" fill="#7c7f83"/><rect x="436.0" y="18" width="1" height="7" fill="#7c7f83"/><rect x="444.0" y="12" width="1" height="13" fill="#7c7f83"/><rect x="452.0" y="18" width="1" height="7" fill="#7c7f83"/><rect x="460.0" y="18" width="1" height="7" fill="#7c7f83"/><rect x="468.0" y="18" width="1" height="7" fill="#7c7f83"/><rect x="475.0" y="18" width="1" height="7" fill="#7c7f83"/><rect x="483.0" y="0" width="1" height="25" fill="#7c7f83"/><text x="486.5" y="13" font-size="10.5" fill="#6e7276" font-family="Liberation Sans">100</text><rect x="491.0" y="18" width="1" height="7" fill="#7c7f83"/><rect x="499.0" y="18" width="1" height="7" fill="#7c7f83"/><rect x="507.0" y="18" width="1" height="7" fill="#7c7f83"/><rect x="515.0" y="18" width="1" height="7" fill="#7c7f83"/><rect x="523.0" y="12" width="1" height="13" fill="#7c7f83"/><rect x="531.0" y="18" width="1" height="7" fill="#7c7f83"/><rect x="539.0" y="18" width="1" height="7" fill="#7c7f83"/><rect x="547.0" y="18" width="1" height="7" fill="#7c7f83"/><rect x="555.0" y="18" width="1" height="7" fill="#7c7f83"/><rect x="563.0" y="0" width="1" height="25" fill="#7c7f83"/><text x="566.5" y="13" font-size="10.5" fill="#6e7276" font-family="Liberation Sans">125</text><rect x="571.0" y="18" width="1" height="7" fill="#7c7f83"/><rect x="579.0" y="18" width="1" height="7" fill="#7c7f83"/><rect x="587.0" y="18" width="1" height="7" fill="#7c7f83"/><rect x="595.0" y="18" width="1" height="7" fill="#7c7f83"/><rect x="603.0" y="12" width="1" height="13" fill="#7c7f83"/><rect x="610.0" y="18" width="1" height="7" fill="#7c7f83"/><rect x="618.0" y="18" width="1" height="7" fill="#7c7f83"/><rect x="626.0" y="18" width="1" height="7" fill="#7c7f83"/><rect x="634.0" y="18" width="1" height="7" fill="#7c7f83"/><rect x="642.0" y="0" width="1" height="25" fill="#7c7f83"/><text x="645.5" y="13" font-size="10.5" fill="#6e7276" font-family="Liberation Sans">150</text><rect x="650.0" y="18" width="1" height="7" fill="#7c7f83"/><rect x="658.0" y="18" width="1" height="7" fill="#7c7f83"/><rect x="666.0" y="18" width="1" height="7" fill="#7c7f83"/><rect x="674.0" y="18" width="1" height="7" fill="#7c7f83"/><rect x="682.0" y="12" width="1" height="13" fill="#7c7f83"/><rect x="690.0" y="18" width="1" height="7" fill="#7c7f83"/><rect x="698.0" y="18" width="1" height="7" fill="#7c7f83"/><rect x="706.0" y="18" width="1" height="7" fill="#7c7f83"/><rect x="714.0" y="18" width="1" height="7" fill="#7c7f83"/><rect x="722.0" y="0" width="1" height="25" fill="#7c7f83"/><text x="725.5" y="13" font-size="10.5" fill="#6e7276" font-family="Liberation Sans">175</text><rect x="730.0" y="18" width="1" height="7" fill="#7c7f83"/><rect x="737.0" y="18" width="1" height="7" fill="#7c7f83"/><rect x="745.0" y="18" width="1" height="7" fill="#7c7f83"/><rect x="753.0" y="18" width="1" height="7" fill="#7c7f83"/><rect x="761.0" y="12" width="1" height="13" fill="#7c7f83"/><rect x="769.0" y="18" width="1" height="7" fill="#7c7f83"/><rect x="777.0" y="18" width="1" height="7" fill="#7c7f83"/><rect x="785.0" y="18" width="1" height="7" fill="#7c7f83"/><rect x="793.0" y="18" width="1" height="7" fill="#7c7f83"/><rect x="801.0" y="0" width="1" height="25" fill="#7c7f83"/><text x="804.5" y="13" font-size="10.5" fill="#6e7276" font-family="Liberation Sans">200</text><rect x="809.0" y="18" width="1" height="7" fill="#7c7f83"/><rect x="817.0" y="18" width="1" height="7" fill="#7c7f83"/><rect x="825.0" y="18" width="1" height="7" fill="#7c7f83"/><rect x="833.0" y="18" width="1" height="7" fill="#7c7f83"/><rect x="841.0" y="12" width="1" height="13" fill="#7c7f83"/><rect x="849.0" y="18" width="1" height="7" fill="#7c7f83"/><rect x="857.0" y="18" width="1" height="7" fill="#7c7f83"/><rect x="865.0" y="18" width="1" height="7" fill="#7c7f83"/><rect x="872.0" y="18" width="1" height="7" fill="#7c7f83"/><rect x="880.0" y="0" width="1" height="25" fill="#7c7f83"/><text x="883.5" y="13" font-size="10.5" fill="#6e7276" font-family="Liberation Sans">225</text><rect x="888.0" y="18" width="1" height="7" fill="#7c7f83"/><rect x="896.0" y="18" width="1" height="7" fill="#7c7f83"/><rect x="904.0" y="18" width="1" height="7" fill="#7c7f83"/><rect x="912.0" y="18" width="1" height="7" fill="#7c7f83"/><rect x="920.0" y="12" width="1" height="13" fill="#7c7f83"/><rect x="928.0" y="18" width="1" height="7" fill="#7c7f83"/><rect x="936.0" y="18" width="1" height="7" fill="#7c7f83"/><rect x="944.0" y="18" width="1" height="7" fill="#7c7f83"/><rect x="952.0" y="18" width="1" height="7" fill="#7c7f83"/><rect x="960.0" y="0" width="1" height="25" fill="#7c7f83"/><text x="963.5" y="13" font-size="10.5" fill="#6e7276" font-family="Liberation Sans">250</text><rect x="968.0" y="18" width="1" height="7" fill="#7c7f83"/><rect x="976.0" y="18" width="1" height="7" fill="#7c7f83"/><rect x="984.0" y="18" width="1" height="7" fill="#7c7f83"/><rect x="992.0" y="18" width="1" height="7" fill="#7c7f83"/><rect x="1000.0" y="12" width="1" height="13" fill="#7c7f83"/><rect x="1007.0" y="18" width="1" height="7" fill="#7c7f83"/><rect x="1015.0" y="18" width="1" height="7" fill="#7c7f83"/><rect x="1023.0" y="18" width="1" height="7" fill="#7c7f83"/><rect x="1031.0" y="18" width="1" height="7" fill="#7c7f83"/><rect x="1039.0" y="0" width="1" height="25" fill="#7c7f83"/><text x="1042.5" y="13" font-size="10.5" fill="#6e7276" font-family="Liberation Sans">275</text><rect x="1047.0" y="18" width="1" height="7" fill="#7c7f83"/><rect x="1055.0" y="18" width="1" height="7" fill="#7c7f83"/><rect x="1063.0" y="18" width="1" height="7" fill="#7c7f83"/><rect x="1071.0" y="18" width="1" height="7" fill="#7c7f83"/><rect x="1079.0" y="12" width="1" height="13" fill="#7c7f83"/><rect x="1087.0" y="18" width="1" height="7" fill="#7c7f83"/><rect x="1095.0" y="18" width="1" height="7" fill="#7c7f83"/><rect x="1103.0" y="18" width="1" height="7" fill="#7c7f83"/><path d="M1086 19L1096 19L1091 24Z" fill="#888"/></svg>
<div style="position:absolute;left:1185px;top:133px;width:18px;height:25px;background:#fafaf9;border:1px solid #8b7f73;border-radius:5px;box-sizing:border-box"></div>
<svg style="position:absolute;left:1187px;top:139px;" width="14" height="13" viewBox="0 0 14 13"><rect x="0" y="0" width="14" height="13" rx="3" fill="#2b2f33"/><text x="7" y="11" font-size="11" font-weight="bold" text-anchor="middle" fill="#fff" font-family="Liberation Sans">1</text></svg>
<svg style="position:absolute;left:57px;top:159px;overflow:hidden" width="20" height="786" viewBox="0 0 20 786"><rect x="19" y="0" width="1" height="786" fill="#7c7f83"/><rect x="14" y="2.0" width="6" height="1" fill="#7c7f83"/><rect x="2" y="10.0" width="18" height="1" fill="#7c7f83"/><text x="10" y="24.0" font-size="10.5" text-anchor="middle" fill="#6e7276" font-family="Liberation Sans">2</text><text x="10" y="37.0" font-size="10.5" text-anchor="middle" fill="#6e7276" font-family="Liberation Sans">5</text><rect x="14" y="18.0" width="6" height="1" fill="#7c7f83"/><rect x="14" y="26.0" width="6" height="1" fill="#7c7f83"/><rect x="14" y="34.0" width="6" height="1" fill="#7c7f83"/><rect x="14" y="42.0" width="6" height="1" fill="#7c7f83"/><rect x="9" y="50.0" width="11" height="1" fill="#7c7f83"/><rect x="14" y="57.0" width="6" height="1" fill="#7c7f83"/><rect x="14" y="65.0" width="6" height="1" fill="#7c7f83"/><rect x="14" y="73.0" width="6" height="1" fill="#7c7f83"/><rect x="14" y="81.0" width="6" height="1" fill="#7c7f83"/><rect x="2" y="89.0" width="18" height="1" fill="#7c7f83"/><text x="10" y="103.0" font-size="10.5" text-anchor="middle" fill="#6e7276" font-family="Liberation Sans">5</text><text x="10" y="116.0" font-size="10.5" text-anchor="middle" fill="#6e7276" font-family="Liberation Sans">0</text><rect x="14" y="97.0" width="6" height="1" fill="#7c7f83"/><rect x="14" y="105.0" width="6" height="1" fill="#7c7f83"/><rect x="14" y="113.0" width="6" height="1" fill="#7c7f83"/><rect x="14" y="121.0" width="6" height="1" fill="#7c7f83"/><rect x="9" y="129.0" width="11" height="1" fill="#7c7f83"/><rect x="14" y="137.0" width="6" height="1" fill="#7c7f83"/><rect x="14" y="145.0" width="6" height="1" fill="#7c7f83"/><rect x="14" y="153.0" width="6" height="1" fill="#7c7f83"/><rect x="14" y="161.0" width="6" height="1" fill="#7c7f83"/><rect x="2" y="169.0" width="18" height="1" fill="#7c7f83"/><text x="10" y="183.0" font-size="10.5" text-anchor="middle" fill="#6e7276" font-family="Liberation Sans">7</text><text x="10" y="196.0" font-size="10.5" text-anchor="middle" fill="#6e7276" font-family="Liberation Sans">5</text><rect x="14" y="177.0" width="6" height="1" fill="#7c7f83"/><rect x="14" y="184.0" width="6" height="1" fill="#7c7f83"/><rect x="14" y="192.0" width="6" height="1" fill="#7c7f83"/><rect x="14" y="200.0" width="6" height="1" fill="#7c7f83"/><rect x="9" y="208.0" width="11" height="1" fill="#7c7f83"/><rect x="14" y="216.0" width="6" height="1" fill="#7c7f83"/><rect x="14" y="224.0" width="6" height="1" fill="#7c7f83"/><rect x="14" y="232.0" width="6" height="1" fill="#7c7f83"/><rect x="14" y="240.0" width="6" height="1" fill="#7c7f83"/><rect x="2" y="248.0" width="18" height="1" fill="#7c7f83"/><text x="10" y="262.0" font-size="10.5" text-anchor="middle" fill="#6e7276" font-family="Liberation Sans">1</text><text x="10" y="275.0" font-size="10.5" text-anchor="middle" fill="#6e7276" font-family="Liberation Sans">0</text><text x="10" y="288.0" font-size="10.5" text-anchor="middle" fill="#6e7276" font-family="Liberation Sans">0</text><rect x="14" y="256.0" width="6" height="1" fill="#7c7f83"/><rect x="14" y="264.0" width="6" height="1" fill="#7c7f83"/><rect x="14" y="272.0" width="6" height="1" fill="#7c7f83"/><rect x="14" y="280.0" width="6" height="1" fill="#7c7f83"/><rect x="9" y="288.0" width="11" height="1" fill="#7c7f83"/><rect x="14" y="296.0" width="6" height="1" fill="#7c7f83"/><rect x="14" y="304.0" width="6" height="1" fill="#7c7f83"/><rect x="14" y="312.0" width="6" height="1" fill="#7c7f83"/><rect x="14" y="319.0" width="6" height="1" fill="#7c7f83"/><rect x="2" y="327.0" width="18" height="1" fill="#7c7f83"/><text x="10" y="341.0" font-size="10.5" text-anchor="middle" fill="#6e7276" font-family="Liberation Sans">1</text><text x="10" y="354.0" font-size="10.5" text-anchor="middle" fill="#6e7276" font-family="Liberation Sans">2</text><text x="10" y="367.0" font-size="10.5" text-anchor="middle" fill="#6e7276" font-family="Liberation Sans">5</text><rect x="14" y="335.0" width="6" height="1" fill="#7c7f83"/><rect x="14" y="343.0" width="6" height="1" fill="#7c7f83"/><rect x="14" y="351.0" width="6" height="1" fill="#7c7f83"/><rect x="14" y="359.0" width="6" height="1" fill="#7c7f83"/><rect x="9" y="367.0" width="11" height="1" fill="#7c7f83"/><rect x="14" y="375.0" width="6" height="1" fill="#7c7f83"/><rect x="14" y="383.0" width="6" height="1" fill="#7c7f83"/><rect x="14" y="391.0" width="6" height="1" fill="#7c7f83"/><rect x="14" y="399.0" width="6" height="1" fill="#7c7f83"/><rect x="2" y="407.0" width="18" height="1" fill="#7c7f83"/><text x="10" y="421.0" font-size="10.5" text-anchor="middle" fill="#6e7276" font-family="Liberation Sans">1</text><text x="10" y="434.0" font-size="10.5" text-anchor="middle" fill="#6e7276" font-family="Liberation Sans">5</text><text x="10" y="447.0" font-size="10.5" text-anchor="middle" fill="#6e7276" font-family="Liberation Sans">0</text><rect x="14" y="415.0" width="6" height="1" fill="#7c7f83"/><rect x="14" y="423.0" width="6" height="1" fill="#7c7f83"/><rect x="14" y="431.0" width="6" height="1" fill="#7c7f83"/><rect x="14" y="439.0" width="6" height="1" fill="#7c7f83"/><rect x="9" y="447.0" width="11" height="1" fill="#7c7f83"/><rect x="14" y="454.0" width="6" height="1" fill="#7c7f83"/><rect x="14" y="462.0" width="6" height="1" fill="#7c7f83"/><rect x="14" y="470.0" width="6" height="1" fill="#7c7f83"/><rect x="14" y="478.0" width="6" height="1" fill="#7c7f83"/><rect x="2" y="486.0" width="18" height="1" fill="#7c7f83"/><text x="10" y="500.0" font-size="10.5" text-anchor="middle" fill="#6e7276" font-family="Liberation Sans">1</text><text x="10" y="513.0" font-size="10.5" text-anchor="middle" fill="#6e7276" font-family="Liberation Sans">7</text><text x="10" y="526.0" font-size="10.5" text-anchor="middle" fill="#6e7276" font-family="Liberation Sans">5</text><rect x="14" y="494.0" width="6" height="1" fill="#7c7f83"/><rect x="14" y="502.0" width="6" height="1" fill="#7c7f83"/><rect x="14" y="510.0" width="6" height="1" fill="#7c7f83"/><rect x="14" y="518.0" width="6" height="1" fill="#7c7f83"/><rect x="9" y="526.0" width="11" height="1" fill="#7c7f83"/><rect x="14" y="534.0" width="6" height="1" fill="#7c7f83"/><rect x="14" y="542.0" width="6" height="1" fill="#7c7f83"/><rect x="14" y="550.0" width="6" height="1" fill="#7c7f83"/><rect x="14" y="558.0" width="6" height="1" fill="#7c7f83"/><rect x="2" y="566.0" width="18" height="1" fill="#7c7f83"/><text x="10" y="580.0" font-size="10.5" text-anchor="middle" fill="#6e7276" font-family="Liberation Sans">2</text><text x="10" y="593.0" font-size="10.5" text-anchor="middle" fill="#6e7276" font-family="Liberation Sans">0</text><text x="10" y="606.0" font-size="10.5" text-anchor="middle" fill="#6e7276" font-family="Liberation Sans">0</text><rect x="14" y="574.0" width="6" height="1" fill="#7c7f83"/><rect x="14" y="581.0" width="6" height="1" fill="#7c7f83"/><rect x="14" y="589.0" width="6" height="1" fill="#7c7f83"/><rect x="14" y="597.0" width="6" height="1" fill="#7c7f83"/><rect x="9" y="605.0" width="11" height="1" fill="#7c7f83"/><rect x="14" y="613.0" width="6" height="1" fill="#7c7f83"/><rect x="14" y="621.0" width="6" height="1" fill="#7c7f83"/><rect x="14" y="629.0" width="6" height="1" fill="#7c7f83"/><rect x="14" y="637.0" width="6" height="1" fill="#7c7f83"/><rect x="2" y="645.0" width="18" height="1" fill="#7c7f83"/><text x="10" y="659.0" font-size="10.5" text-anchor="middle" fill="#6e7276" font-family="Liberation Sans">2</text><text x="10" y="672.0" font-size="10.5" text-anchor="middle" fill="#6e7276" font-family="Liberation Sans">2</text><text x="10" y="685.0" font-size="10.5" text-anchor="middle" fill="#6e7276" font-family="Liberation Sans">5</text><rect x="14" y="653.0" width="6" height="1" fill="#7c7f83"/><rect x="14" y="661.0" width="6" height="1" fill="#7c7f83"/><rect x="14" y="669.0" width="6" height="1" fill="#7c7f83"/><rect x="14" y="677.0" width="6" height="1" fill="#7c7f83"/><rect x="9" y="685.0" width="11" height="1" fill="#7c7f83"/><rect x="14" y="693.0" width="6" height="1" fill="#7c7f83"/><rect x="14" y="701.0" width="6" height="1" fill="#7c7f83"/><rect x="14" y="709.0" width="6" height="1" fill="#7c7f83"/><rect x="14" y="716.0" width="6" height="1" fill="#7c7f83"/><rect x="2" y="724.0" width="18" height="1" fill="#7c7f83"/><text x="10" y="738.0" font-size="10.5" text-anchor="middle" fill="#6e7276" font-family="Liberation Sans">2</text><text x="10" y="751.0" font-size="10.5" text-anchor="middle" fill="#6e7276" font-family="Liberation Sans">5</text><text x="10" y="764.0" font-size="10.5" text-anchor="middle" fill="#6e7276" font-family="Liberation Sans">0</text><rect x="14" y="732.0" width="6" height="1" fill="#7c7f83"/><rect x="14" y="740.0" width="6" height="1" fill="#7c7f83"/><rect x="14" y="748.0" width="6" height="1" fill="#7c7f83"/><rect x="14" y="756.0" width="6" height="1" fill="#7c7f83"/><rect x="9" y="764.0" width="11" height="1" fill="#7c7f83"/><rect x="14" y="772.0" width="6" height="1" fill="#7c7f83"/><rect x="14" y="780.0" width="6" height="1" fill="#7c7f83"/><path d="M14 151L19 156L14 161Z" fill="#888"/></svg>
<div style="position:absolute;left:77px;top:159px;width:1126px;height:812px;background:#cfcfcf"></div>
<div style="position:absolute;left:243px;top:159px;width:668px;height:786px;background:#ffffff;border-left:1px solid #8c8c8c;border-right:1px solid #5f5f5f;box-sizing:border-box"></div>
<div style="position:absolute;left:911px;top:159px;width:5px;height:786px;background:linear-gradient(90deg,#8a8a8a,#cfcfcf)"></div>
<div style="position:absolute;left:77px;top:945px;width:1126px;height:26px;background:#cfcfcf"></div>
<div style="position:absolute;left:374px;top:953px;width:570px;height:9px;background:#7d8281;border-radius:4.5px"></div>
<div style="position:absolute;left:323px;top:298px;width:432px;height:432px;background:linear-gradient(180deg,#50470f 0%,#63520f 3.4%,#7f6318 8.7%,#987e26 13.9%,#ab9232 19.2%,#c4ae4c 24.4%,#e0cd62 29.6%,#ecde6a 35%,#f4ea72 38.4%,#e6d664 42.8%,#d3bd53 49.8%,#c6aa42 54.3%,#b89a36 58%,#a68a2c 63%,#c3a542 70.1%,#d7c558 77%,#d2bd52 83.3%,#bc9c38 89.1%,#9a7a26 93.8%,#7a6218 97.5%,#5d4c14 100%)"></div>
<svg style="position:absolute;left:322px;top:297px;" width="434" height="434" viewBox="0 0 434 434"><rect x="0.5" y="0.5" width="433" height="433" fill="none" stroke="#fff" stroke-width="1"/><rect x="0.5" y="0.5" width="433" height="433" fill="none" stroke="#000090" stroke-width="1" stroke-dasharray="4 4"/><rect x="1.5" y="1.5" width="431" height="431" fill="none" stroke="rgba(0,0,0,0.55)" stroke-width="1"/></svg>
<svg style="position:absolute;left:309px;top:284px;" width="14" height="14" viewBox="0 0 14 14"><g transform="rotate(45 7 7)"><path d="M0 7L4 3V5.5H10V3L14 7L10 11V8.5H4V11Z" fill="#000"/></g></svg>
<svg style="position:absolute;left:755px;top:284px;" width="14" height="14" viewBox="0 0 14 14"><g transform="rotate(-45 7 7)"><path d="M0 7L4 3V5.5H10V3L14 7L10 11V8.5H4V11Z" fill="#000"/></g></svg>
<svg style="position:absolute;left:309px;top:730px;" width="14" height="14" viewBox="0 0 14 14"><g transform="rotate(-45 7 7)"><path d="M0 7L4 3V5.5H10V3L14 7L10 11V8.5H4V11Z" fill="#000"/></g></svg>
<svg style="position:absolute;left:755px;top:730px;" width="14" height="14" viewBox="0 0 14 14"><g transform="rotate(45 7 7)"><path d="M0 7L4 3V5.5H10V3L14 7L10 11V8.5H4V11Z" fill="#000"/></g></svg>
<svg style="position:absolute;left:531px;top:283px;" width="14" height="14" viewBox="0 0 14 14"><g transform="rotate(90 7 7)"><path d="M0 7L4 3V5.5H10V3L14 7L10 11V8.5H4V11Z" fill="#000"/></g></svg>
<svg style="position:absolute;left:531px;top:731px;" width="14" height="14" viewBox="0 0 14 14"><g transform="rotate(90 7 7)"><path d="M0 7L4 3V5.5H10V3L14 7L10 11V8.5H4V11Z" fill="#000"/></g></svg>
<svg style="position:absolute;left:307px;top:506px;" width="14" height="14" viewBox="0 0 14 14"><g transform="rotate(0 7 7)"><path d="M0 7L4 3V5.5H10V3L14 7L10 11V8.5H4V11Z" fill="#000"/></g></svg>
<svg style="position:absolute;left:757px;top:506px;" width="14" height="14" viewBox="0 0 14 14"><g transform="rotate(0 7 7)"><path d="M0 7L4 3V5.5H10V3L14 7L10 11V8.5H4V11Z" fill="#000"/></g></svg>
<div style="position:absolute;left:1184px;top:946px;width:19px;height:24px;background:#f0efed;border:1px solid #8b7f73;border-radius:4px;box-sizing:border-box"></div>
<svg style="position:absolute;left:1186px;top:950px;" width="15" height="16" viewBox="0 0 15 16"><defs><linearGradient id="cmA" x1="0" y1="0" x2="0" y2="1"><stop offset="0" stop-color="#2a6cff"/><stop offset="0.5" stop-color="#ff20a0"/><stop offset="1" stop-color="#ff3010"/></linearGradient><linearGradient id="cmB" x1="0" y1="0" x2="1" y2="0"><stop offset="0" stop-color="#20d040" stop-opacity="0.9"/><stop offset="1" stop-color="#ffffff" stop-opacity="0.2"/></linearGradient></defs><path d="M2.5 2L13.5 9L2.5 15Z" fill="url(#cmA)"/><path d="M2.5 2L13.5 9L2.5 15Z" fill="url(#cmB)" stroke="#222" stroke-width="0.7"/></svg>
<div style="position:absolute;left:3px;top:971px;width:1903px;height:19px;background:#fafaf9"></div>
<svg style="position:absolute;left:4px;top:973px;" width="94" height="17" viewBox="0 0 94 17"><path d="M0 1L94 17M94 1L0 17" stroke="#6e0000" stroke-width="3"/></svg>
<div style="position:absolute;left:100px;top:973px;width:94px;height:17px;background:#0050a8"></div>
<div style="position:absolute;left:196px;top:973px;width:94px;height:17px;background:#88a4d4"></div>
<div style="position:absolute;left:292px;top:973px;width:94px;height:17px;background:#d0d4ec"></div>
<div style="position:absolute;left:388px;top:973px;width:94px;height:17px;background:#fdb022"></div>
<div style="position:absolute;left:484px;top:973px;width:94px;height:17px;background:#fdc980"></div>
<div style="position:absolute;left:580px;top:973px;width:94px;height:17px;background:#fde3a8"></div>
<div style="position:absolute;left:676px;top:973px;width:94px;height:17px;background:#cd1a5d"></div>
<div style="position:absolute;left:772px;top:973px;width:94px;height:17px;background:#ee7f9c"></div>
<div style="position:absolute;left:868px;top:973px;width:94px;height:17px;background:#f7c9d3"></div>
<div style="position:absolute;left:964px;top:973px;width:94px;height:17px;background:#3c6422"></div>
<div style="position:absolute;left:1060px;top:973px;width:94px;height:17px;background:#93ae7e"></div>
<div style="position:absolute;left:1155px;top:973px;width:94px;height:17px;background:#c9d8bc"></div>
<div style="position:absolute;left:1251px;top:973px;width:94px;height:17px;background:#888888"></div>
<div style="position:absolute;left:1347px;top:973px;width:94px;height:17px;background:#ffffff"></div>
<div style="position:absolute;left:1443px;top:973px;width:94px;height:17px;background:#000000"></div>
<div style="position:absolute;left:1539px;top:973px;width:94px;height:17px;background:#00b2eb"></div>
<div style="position:absolute;left:1635px;top:973px;width:94px;height:17px;background:#4eae4f"></div>
<div style="position:absolute;left:1731px;top:973px;width:94px;height:17px;background:#3a3f49"></div>
<svg style="position:absolute;left:1830px;top:978px;" width="70" height="12" viewBox="0 0 70 12"><path d="M1 11L7 5L13 11" fill="none" stroke="#2e3436" stroke-width="1.5"/><path d="M32 5L38 11L44 5" fill="none" stroke="#2e3436" stroke-width="1.5"/></svg>
<div style="position:absolute;left:1885px;top:973px;width:21px;height:17px;background:#f6f5f4;border:1px solid #8b7f73;border-radius:4px;box-sizing:border-box"></div>
<svg style="position:absolute;left:1889px;top:981px;" width="14" height="8" viewBox="0 0 14 8"><path d="M0 1H13M0 5H13" stroke="#2e3436" stroke-width="1.5"/></svg>
<div style="position:absolute;left:1203px;top:133px;width:703px;height:838px;background:#fafaf9"></div>
<div style="position:absolute;left:1215px;top:138px;width:686px;height:36px;background:#e2dfdb"></div>
<div style="position:absolute;left:1215px;top:174px;width:686px;height:1px;background:#8b7f73"></div>
<div style="position:absolute;left:1287px;top:138px;width:1px;height:36px;background:#cfcac5"></div>
<div style="position:absolute;left:1288px;top:138px;width:58px;height:33px;background:#efedeb"></div>
<div style="position:absolute;left:1346px;top:138px;width:1px;height:36px;background:#cfcac5"></div>
<div style="position:absolute;left:1288px;top:171px;width:58px;height:3px;background:#1b6acb"></div>
<svg style="position:absolute;left:1240.0px;top:145.0px;" width="22" height="22" viewBox="0 0 22 22"><path d="M2 11L8 5V9H13V20H9V13H8V17Z" fill="#f6c400" stroke="#222" stroke-width="0.9"/><circle cx="15" cy="7" r="5" fill="#dfe7f2" stroke="#333" stroke-width="0.9"/><path d="M15 4V7H17" fill="none" stroke="#222" stroke-width="0.9"/></svg>
<svg style="position:absolute;left:1297px;top:144px" width="20" height="20" viewBox="0 0 24 24"><defs><linearGradient id="fsC" x1="0" y1="0" x2="1" y2="0"><stop offset="0" stop-color="#000"/><stop offset="1" stop-color="#999"/></linearGradient><linearGradient id="fsD" x1="0" y1="0" x2="0" y2="1"><stop offset="0" stop-color="#000"/><stop offset="1" stop-color="#aaa"/></linearGradient></defs><rect x="3" y="2.5" width="19" height="2.5" fill="url(#fsC)"/><rect x="3" y="2.5" width="2.5" height="19" fill="url(#fsD)"/><path d="M3 22Q5 17 9 14.5Q11 13 13 13L16 10L19.5 13.5L16.5 16.5Q15 19 12 20.5Q8 22 3 22Z" fill="#111"/><path d="M8 18Q10 16 12 15.5" stroke="#888" stroke-width="1.2" fill="none"/><path d="M13.5 13L15.5 11" stroke="#ddd" stroke-width="1.2"/><path d="M16 8L20.5 12.5L19 14L14.5 9.5Z" fill="#111"/><path d="M17 9L23 4V14.5Z" fill="#f6c21e"/><path d="M23 4V14.5L20 12Z" fill="#f09010"/></svg>
<svg style="position:absolute;left:1320px;top:150px;" width="12" height="12" viewBox="0 0 12 12"><path d="M2 2L10 10M10 2L2 10" stroke="#777" stroke-width="1.6"/></svg>
<svg style="position:absolute;left:1371.0px;top:145.0px;" width="22" height="22" viewBox="0 0 22 22"><path d="M3 3H19V8.5H17.5Q17 5.5 14.5 5.5H13V17.5Q13 18.5 15 19V20.5H7V19Q9 18.5 9 17.5V5.5H7.5Q5 5.5 4.5 8.5H3Z" fill="#111"/></svg>
<svg style="position:absolute;left:1435.0px;top:145.0px;" width="22" height="22" viewBox="0 0 22 22"><rect x="3" y="1" width="1.5" height="20" fill="#d11"/><rect x="5" y="2" width="6" height="4" fill="#bcd0e8" stroke="#333" stroke-width="0.8"/><rect x="5" y="8" width="13" height="4" fill="#bcd0e8" stroke="#333" stroke-width="0.8"/><rect x="5" y="14" width="10" height="4" fill="#bcd0e8" stroke="#333" stroke-width="0.8"/></svg>
<svg style="position:absolute;left:1499.0px;top:145.0px;" width="22" height="22" viewBox="0 0 22 22"><path d="M6 3H18L16 6H4Z" fill="#111"/><path d="M5 9H18L16 12H3Z" fill="#111"/><path d="M7 15H19L17 18H5Z" fill="#111"/></svg>
<svg style="position:absolute;left:1563.0px;top:145.0px;" width="22" height="22" viewBox="0 0 22 22"><path d="M3 2.5H11L14.5 6V19.5H3Z" fill="#fff" stroke="#111" stroke-width="1"/><path d="M11 2.5V6H14.5" fill="none" stroke="#111" stroke-width="0.8"/><path d="M8 11H17" stroke="#111" stroke-width="1.2"/><path d="M16 8.5L20 11L16 13.5Z" fill="#111"/></svg>
<svg style="position:absolute;left:1627.0px;top:145.0px;" width="22" height="22" viewBox="0 0 22 22"><rect x="4" y="3" width="8" height="8" fill="#b4cbe6" stroke="#111" stroke-width="1.2"/><path d="M14 6Q19 8 18 13Q16 18 11 17" fill="none" stroke="#d22" stroke-width="1.3" stroke-dasharray="1.5 1.2"/><path d="M12 6L15 4V8Z" fill="#d22"/></svg>
<svg style="position:absolute;left:1691.0px;top:145.0px;" width="22" height="22" viewBox="0 0 22 22"><path d="M3 9H11V17H3Z" fill="none" stroke="#111" stroke-width="1"/><path d="M4.5 7.5H12V15" fill="none" stroke="#111" stroke-width="1"/><circle cx="13" cy="9" r="6" fill="#e2dfdb" stroke="#111" stroke-width="1"/><circle cx="13" cy="9" r="4" fill="none" stroke="#111" stroke-width="1"/></svg>
<svg style="position:absolute;left:1755.0px;top:145.0px;" width="22" height="22" viewBox="0 0 22 22"><path d="M4 18Q8 8 17 5" fill="none" stroke="#1a7a1a" stroke-width="1.4"/><path d="M6 14L5 10M8 11L8 7M10 9L11 6M12 7.5L14 5" stroke="#555" stroke-width="0.8"/><circle cx="4" cy="18" r="1.5" fill="#fff" stroke="#00f" stroke-width="1"/><circle cx="17" cy="5" r="1.5" fill="#fff" stroke="#00f" stroke-width="1"/></svg>
<svg style="position:absolute;left:1819.0px;top:145.0px;" width="22" height="22" viewBox="0 0 22 22"><circle cx="9" cy="9" r="6" fill="none" stroke="#2e3436" stroke-width="2.2"/><path d="M13.5 13.5L19 19" stroke="#2e3436" stroke-width="2.4"/></svg>
<div style="position:absolute;left:1870px;top:141px;width:30px;height:30px;background:#ebe9e6;border-radius:6px"></div>
<svg style="position:absolute;left:1877px;top:150px;" width="16" height="10" viewBox="0 0 16 10"><path d="M1 1L8 8L15 1" fill="none" stroke="#7a7e80" stroke-width="1.8"/></svg>
<div style="position:absolute;left:1216px;top:177px;width:684px;height:676px;background:#ffffff;border:1px solid #8b7f73;box-sizing:border-box"></div>
<div style="position:absolute;left:1217px;top:178px;width:682px;height:36px;background:#e2dfdb"></div>
<div style="position:absolute;left:1217px;top:214px;width:682px;height:1px;background:#8b7f73"></div>
<div style="position:absolute;left:1225px;top:211px;width:89px;height:3px;background:#1b6acb"></div>
<svg style="position:absolute;left:1236px;top:188px;" width="16" height="16" viewBox="0 0 16 16"><defs><linearGradient id="fl" x1="0" y1="0" x2="1" y2="1"><stop offset="0" stop-color="#a9bfdc"/><stop offset="1" stop-color="#f8f9fb"/></linearGradient></defs><rect x="0" y="0" width="16" height="16" fill="url(#fl)"/></svg>
<div style="position:absolute;left:1258px;top:189px;font-size:13px;line-height:15px;color:#2e3436;white-space:nowrap;;letter-spacing:0.3px">Füllung</div>
<svg style="position:absolute;left:1334px;top:188px;" width="16" height="16" viewBox="0 0 16 16"><rect x="0.5" y="0.5" width="15" height="15" fill="none" stroke="#333" stroke-width="1"/><rect x="1.5" y="1.5" width="13" height="13" fill="none" stroke="#bbb" stroke-width="1"/></svg>
<div style="position:absolute;left:1354px;top:189px;font-size:13px;line-height:15px;color:#2e3436;white-space:nowrap;;letter-spacing:0.3px">Farbe der Kontur</div>
<svg style="position:absolute;left:1487px;top:187px;" width="18" height="18" viewBox="0 0 18 18"><path d="M1 6H15M1 10H15M1 14H15" stroke="#222" stroke-width="1.2"/><path d="M1 10H15" stroke="#fff" stroke-width="1.2" stroke-dasharray="2 1.5"/><path d="M13 3L16 6L13 9Z" fill="#222"/></svg>
<div style="position:absolute;left:1508px;top:189px;font-size:13px;line-height:15px;color:#2e3436;white-space:nowrap;;letter-spacing:0.3px">Muster der Kontur</div>
<div style="position:absolute;left:1293px;top:220px;width:35px;height:32px;background:#e0dcd8;border:1px solid #8b7f73;border-radius:6px;box-sizing:border-box"></div>
<svg style="position:absolute;left:1233px;top:230px;" width="12" height="12" viewBox="0 0 12 12"><path d="M2 2L10 10M10 2L2 10" stroke="#111" stroke-width="2"/></svg>
<svg style="position:absolute;left:1266px;top:227px;" width="18" height="18" viewBox="0 0 18 18"><rect x="1.5" y="1.5" width="15" height="15" fill="#9bb5d4" stroke="#222" stroke-width="1.3"/></svg>
<svg style="position:absolute;left:1302px;top:227px;" width="18" height="18" viewBox="0 0 18 18"><defs><linearGradient id="ft1" x1="0" y1="0" x2="1" y2="1"><stop offset="0" stop-color="#9bb5d4"/><stop offset="1" stop-color="#fafbfc"/></linearGradient></defs><rect x="1.5" y="1.5" width="15" height="15" fill="url(#ft1)" stroke="#222" stroke-width="1.3"/></svg>
<svg style="position:absolute;left:1338px;top:227px;" width="18" height="18" viewBox="0 0 18 18"><defs><radialGradient id="ft2" cx="0.5" cy="0.75" r="0.7"><stop offset="0" stop-color="#fff"/><stop offset="1" stop-color="#9bb5d4"/></radialGradient></defs><rect x="1.5" y="1.5" width="15" height="15" fill="url(#ft2)" stroke="#222" stroke-width="1.3"/></svg>
<svg style="position:absolute;left:1374px;top:227px;" width="18" height="18" viewBox="0 0 18 18"><rect x="1.5" y="1.5" width="15" height="15" fill="#fff" stroke="#222" stroke-width="1.3"/><rect x="2" y="2" width="7" height="7" fill="#9bb5d4"/><rect x="9" y="9" width="7" height="7" fill="#9bb5d4"/></svg>
<svg style="position:absolute;left:1410px;top:227px;" width="18" height="18" viewBox="0 0 18 18"><rect x="1.5" y="1.5" width="15" height="15" fill="#b8cce2" stroke="#222" stroke-width="1.3"/><circle cx="5.5" cy="5.5" r="2.3" fill="#fff"/><circle cx="12.5" cy="5.5" r="2.3" fill="#fff"/><circle cx="5.5" cy="12.5" r="2.3" fill="#fff"/><circle cx="12.5" cy="12.5" r="2.3" fill="#fff"/><circle cx="9" cy="9" r="2.3" fill="#fff"/></svg>
<svg style="position:absolute;left:1446px;top:227px;" width="18" height="18" viewBox="0 0 18 18"><rect x="1.5" y="1.5" width="15" height="15" fill="#fff" stroke="#222" stroke-width="1.3"/><path d="M14.5 3.5V14.5H3.5" fill="none" stroke="#333" stroke-width="1.2"/><rect x="2.2" y="2.2" width="13.6" height="13.6" fill="none" stroke="#9bb5d4" stroke-width="0.8"/></svg>
<div style="position:absolute;left:1485px;top:226px;font-size:22px;line-height:24px;color:#111;white-space:nowrap;font-weight:bold">?</div>
<div style="position:absolute;left:1822px;top:220px;width:36px;height:32px;background:#e0dcd8;border:1px solid #8b7f73;border-radius:6px;box-sizing:border-box"></div>
<svg style="position:absolute;left:1831px;top:227px;" width="18" height="18" viewBox="0 0 18 18"><path d="M2 5Q2 1 5 2L9 5L13 2Q16 1 16 5V11Q16 17 9 17Q2 17 2 11Z" fill="#111"/><ellipse cx="9" cy="11" rx="3" ry="3.5" fill="#e0dcd8"/></svg>
<svg style="position:absolute;left:1868px;top:227px;" width="18" height="18" viewBox="0 0 18 18"><path d="M2 4Q2 1 5 2L9 5L13 2Q16 1 16 4V10Q16 17 9 17Q2 17 2 10Z" fill="#111"/></svg>
<div style="position:absolute;left:1225px;top:271px;font-size:13px;line-height:15px;color:#2e3436;white-space:nowrap;;letter-spacing:0.3px">Farbverlauf:</div>
<div style="position:absolute;left:1298px;top:261px;width:59px;height:33px;background:#e0dcd8;border:1px solid #8b7f73;border-radius:6px;box-sizing:border-box"></div>
<svg style="position:absolute;left:1308px;top:268px;" width="18" height="18" viewBox="0 0 18 18"><defs><linearGradient id="gm" x1="0" y1="0" x2="1" y2="0"><stop offset="0" stop-color="#111"/><stop offset="1" stop-color="#555"/></linearGradient></defs><rect x="1" y="3" width="15" height="3" fill="url(#gm)"/><rect x="1" y="8" width="15" height="3" fill="url(#gm)"/><rect x="1" y="13" width="15" height="3" fill="url(#gm)"/></svg>
<svg style="position:absolute;left:1332px;top:273px;" width="14" height="8" viewBox="0 0 14 8"><path d="M0 0H13L6.5 7Z" fill="#2e3436"/></svg>
<svg style="position:absolute;left:1699px;top:273px;" width="17" height="11" viewBox="0 0 17 11"><path d="M1.5 5.5H15.5M5.5 1.5L1.5 5.5L5.5 9.5M11.5 1.5L15.5 5.5L11.5 9.5" fill="none" stroke="#2e3436" stroke-width="2.3"/></svg>
<div style="position:absolute;left:1742px;top:271px;font-size:13px;line-height:15px;color:#2e3436;white-space:nowrap;letter-spacing:0.4px">Wiederholung:</div>
<svg style="position:absolute;left:1847px;top:275px;" width="12" height="7" viewBox="0 0 12 7"><path d="M1 0V7M11 0V7M1 3.5H11" fill="none" stroke="#111" stroke-width="2.2"/></svg>
<svg style="position:absolute;left:1871px;top:275px;" width="12" height="7" viewBox="0 0 12 7"><path d="M0 0H12L6 6Z" fill="#2e3436"/></svg>
<div style="position:absolute;left:1234px;top:297px;width:648px;height:18px;background:linear-gradient(90deg,#22230a 0%,#3d3410 5%,#6a5416 10%,#8a6c1e 15%,#a58a2e 20%,#c5ad4c 28%,#e0d060 35%,#f5ec70 41.4%,#e6d65e 46.7%,#d6be4c 51.7%,#d0b548 54.1%,#bc9a33 57.2%,#a48a2a 63.2%,#b8992f 66.1%,#ccb045 69.7%,#d6be4d 72.8%,#dac552 75.7%,#d8c04e 78.7%,#d2b649 81.7%,#b69631 87.8%,#8b6a1c 93.5%,#5c4a13 97.4%,#222205 100%)"></div>
<svg style="position:absolute;left:1496px;top:297px;" width="12" height="6" viewBox="0 0 12 6"><path d="M1 0.5L6 5L11 0.5" fill="none" stroke="#555" stroke-width="1.6"/></svg>
<svg style="position:absolute;left:1226px;top:307px;" width="680" height="26" viewBox="0 0 680 26"><path d="M269.5 8L276.0 1.5L282.5 8V20.5Q282.5 22 281.0 22H271.0Q269.5 22 269.5 20.5Z" fill="#f5ec70" stroke="#b8b8b8" stroke-width="3"/><path d="M269.5 8L276.0 1.5L282.5 8V20.5Q282.5 22 281.0 22H271.0Q269.5 22 269.5 20.5Z" fill="#f5ec70" stroke="#ffffff" stroke-width="1.5"/><path d="M304.2 8L310.7 1.5L317.2 8V20.5Q317.2 22 315.7 22H305.7Q304.2 22 304.2 20.5Z" fill="#e6d65e" stroke="#b8b8b8" stroke-width="3"/><path d="M304.2 8L310.7 1.5L317.2 8V20.5Q317.2 22 315.7 22H305.7Q304.2 22 304.2 20.5Z" fill="#e6d65e" stroke="#ffffff" stroke-width="1.5"/><path d="M336.4 8L342.9 1.5L349.4 8V20.5Q349.4 22 347.9 22H337.9Q336.4 22 336.4 20.5Z" fill="#d6be4c" stroke="#b8b8b8" stroke-width="3"/><path d="M336.4 8L342.9 1.5L349.4 8V20.5Q349.4 22 347.9 22H337.9Q336.4 22 336.4 20.5Z" fill="#d6be4c" stroke="#ffffff" stroke-width="1.5"/><path d="M352.4 8L358.9 1.5L365.4 8V20.5Q365.4 22 363.9 22H353.9Q352.4 22 352.4 20.5Z" fill="#d0b548" stroke="#b8b8b8" stroke-width="3"/><path d="M352.4 8L358.9 1.5L365.4 8V20.5Q365.4 22 363.9 22H353.9Q352.4 22 352.4 20.5Z" fill="#d0b548" stroke="#ffffff" stroke-width="1.5"/><path d="M372.1 8L378.6 1.5L385.1 8V20.5Q385.1 22 383.6 22H373.6Q372.1 22 372.1 20.5Z" fill="#bc9a33" stroke="#b8b8b8" stroke-width="3"/><path d="M372.1 8L378.6 1.5L385.1 8V20.5Q385.1 22 383.6 22H373.6Q372.1 22 372.1 20.5Z" fill="#bc9a33" stroke="#ffffff" stroke-width="1.5"/><path d="M411.3 8L417.8 1.5L424.3 8V20.5Q424.3 22 422.8 22H412.8Q411.3 22 411.3 20.5Z" fill="#a48a2a" stroke="#b8b8b8" stroke-width="3"/><path d="M411.3 8L417.8 1.5L424.3 8V20.5Q424.3 22 422.8 22H412.8Q411.3 22 411.3 20.5Z" fill="#a48a2a" stroke="#ffffff" stroke-width="1.5"/><path d="M430.1 8L436.6 1.5L443.1 8V20.5Q443.1 22 441.6 22H431.6Q430.1 22 430.1 20.5Z" fill="#b8992f" stroke="#b8b8b8" stroke-width="3"/><path d="M430.1 8L436.6 1.5L443.1 8V20.5Q443.1 22 441.6 22H431.6Q430.1 22 430.1 20.5Z" fill="#b8992f" stroke="#ffffff" stroke-width="1.5"/><path d="M453.1 8L459.6 1.5L466.1 8V20.5Q466.1 22 464.6 22H454.6Q453.1 22 453.1 20.5Z" fill="#ccb045" stroke="#b8b8b8" stroke-width="3"/><path d="M453.1 8L459.6 1.5L466.1 8V20.5Q466.1 22 464.6 22H454.6Q453.1 22 453.1 20.5Z" fill="#ccb045" stroke="#ffffff" stroke-width="1.5"/><path d="M473.3 8L479.8 1.5L486.3 8V20.5Q486.3 22 484.8 22H474.8Q473.3 22 473.3 20.5Z" fill="#d6be4d" stroke="#b8b8b8" stroke-width="3"/><path d="M473.3 8L479.8 1.5L486.3 8V20.5Q486.3 22 484.8 22H474.8Q473.3 22 473.3 20.5Z" fill="#d6be4d" stroke="#ffffff" stroke-width="1.5"/><path d="M492.3 8L498.8 1.5L505.3 8V20.5Q505.3 22 503.8 22H493.8Q492.3 22 492.3 20.5Z" fill="#dac552" stroke="#b8b8b8" stroke-width="3"/><path d="M492.3 8L498.8 1.5L505.3 8V20.5Q505.3 22 503.8 22H493.8Q492.3 22 492.3 20.5Z" fill="#dac552" stroke="#ffffff" stroke-width="1.5"/><path d="M511.2 8L517.7 1.5L524.2 8V20.5Q524.2 22 522.7 22H512.7Q511.2 22 511.2 20.5Z" fill="#d8c04e" stroke="#b8b8b8" stroke-width="3"/><path d="M511.2 8L517.7 1.5L524.2 8V20.5Q524.2 22 522.7 22H512.7Q511.2 22 511.2 20.5Z" fill="#d8c04e" stroke="#ffffff" stroke-width="1.5"/><path d="M530.9 8L537.4 1.5L543.9 8V20.5Q543.9 22 542.4 22H532.4Q530.9 22 530.9 20.5Z" fill="#d2b649" stroke="#b8b8b8" stroke-width="3"/><path d="M530.9 8L537.4 1.5L543.9 8V20.5Q543.9 22 542.4 22H532.4Q530.9 22 530.9 20.5Z" fill="#d2b649" stroke="#ffffff" stroke-width="1.5"/><path d="M570.3 8L576.8 1.5L583.3 8V20.5Q583.3 22 581.8 22H571.8Q570.3 22 570.3 20.5Z" fill="#b69631" stroke="#b8b8b8" stroke-width="3"/><path d="M570.3 8L576.8 1.5L583.3 8V20.5Q583.3 22 581.8 22H571.8Q570.3 22 570.3 20.5Z" fill="#b69631" stroke="#ffffff" stroke-width="1.5"/><path d="M607.3 8L613.8 1.5L620.3 8V20.5Q620.3 22 618.8 22H608.8Q607.3 22 607.3 20.5Z" fill="#8b6a1c" stroke="#b8b8b8" stroke-width="3"/><path d="M607.3 8L613.8 1.5L620.3 8V20.5Q620.3 22 618.8 22H608.8Q607.3 22 607.3 20.5Z" fill="#8b6a1c" stroke="#ffffff" stroke-width="1.5"/><path d="M632.5 8L639.0 1.5L645.5 8V20.5Q645.5 22 644.0 22H634.0Q632.5 22 632.5 20.5Z" fill="#5c4a13" stroke="#b8b8b8" stroke-width="3"/><path d="M632.5 8L639.0 1.5L645.5 8V20.5Q645.5 22 644.0 22H634.0Q632.5 22 632.5 20.5Z" fill="#5c4a13" stroke="#ffffff" stroke-width="1.5"/><path d="M649.5 8L656.0 1.5L662.5 8V20.5Q662.5 22 661.0 22H651.0Q649.5 22 649.5 20.5Z" fill="#222205" stroke="#b8b8b8" stroke-width="3"/><path d="M649.5 8L656.0 1.5L662.5 8V20.5Q662.5 22 661.0 22H651.0Q649.5 22 649.5 20.5Z" fill="#222205" stroke="#ffffff" stroke-width="1.5"/><circle cx="276" cy="14" r="2.8" fill="#fff" stroke="#8a8060" stroke-width="1"/></svg>
<div style="position:absolute;left:1646px;top:343px;font-size:13px;line-height:15px;color:#2e3436;white-space:nowrap;letter-spacing:0.2px">Versatz der Zwischenfarbe:</div>
<div style="position:absolute;left:1811px;top:334px;width:71px;height:31px;background:#fff;border:1px solid #8b7f73;border-radius:5px"></div>
<div style="position:absolute;left:1848px;top:335px;width:1px;height:31px;background:#dcd8d4"></div>
<div style="position:absolute;left:1865px;top:335px;width:1px;height:31px;background:#dcd8d4"></div>
<div style="position:absolute;left:1818px;top:343.0px;font-size:13px;line-height:15px;color:#2e3436;white-space:nowrap;">0,41</div>
<svg style="position:absolute;left:1849.5px;top:343.5px;" width="14" height="14" viewBox="0 0 14 14"><path d="M0 7H14" stroke="#2e3436" stroke-width="1.6"/></svg>
<svg style="position:absolute;left:1867.5px;top:343.5px;" width="14" height="14" viewBox="0 0 14 14"><path d="M0 7H14M7 0V14" stroke="#2e3436" stroke-width="1.6"/></svg>
<div style="position:absolute;left:1480px;top:371px;width:253px;height:33px;background:linear-gradient(#fafaf9,#efedeb);border:1px solid #8b7f73;border-radius:6px;box-sizing:border-box"></div>
<div style="position:absolute;left:1480px;top:372px;width:22px;height:31px;background:#dfdbd7"></div>
<div style="position:absolute;left:1502px;top:372px;width:1px;height:31px;background:#8b7f73"></div>
<div style="position:absolute;left:1544px;top:372px;width:1px;height:31px;background:#8b7f73"></div>
<div style="position:absolute;left:1587px;top:372px;width:1px;height:31px;background:#8b7f73"></div>
<div style="position:absolute;left:1637px;top:372px;width:1px;height:31px;background:#8b7f73"></div>
<div style="position:absolute;left:1689px;top:372px;width:1px;height:31px;background:#8b7f73"></div>
<div style="position:absolute;left:1510px;top:380px;font-size:13px;line-height:15px;color:#2e3436;white-space:nowrap;">HSV</div>
<div style="position:absolute;left:1553px;top:380px;font-size:13px;line-height:15px;color:#2e3436;white-space:nowrap;">RGB</div>
<div style="position:absolute;left:1596px;top:380px;font-size:13px;line-height:15px;color:#2e3436;white-space:nowrap;;letter-spacing:0.3px">CMYK</div>
<div style="position:absolute;left:1644px;top:380px;font-size:13px;line-height:15px;color:#2e3436;white-space:nowrap;;letter-spacing:0.3px">HSLuv</div>
<div style="position:absolute;left:1697px;top:380px;font-size:13px;line-height:15px;color:#2e3436;white-space:nowrap;">CMS</div>
<div style="position:absolute;left:1320px;top:434px;width:495px;height:34px;background:linear-gradient(90deg,#ff0000 0%,#ffff00 16.67%,#00ff00 33.33%,#00ffff 50%,#0000ff 66.67%,#ff00ff 83.33%,#ff0000 100%)"></div>
<div style="position:absolute;left:1320px;top:472px;width:495px;height:34px;background:linear-gradient(90deg,#b3b3b3,#fff566)"></div>
<div style="position:absolute;left:1320px;top:510px;width:495px;height:34px;background:linear-gradient(90deg,#000000 0%,#776f08 25%,#eee011 50%,#f7ef87 75%,#ffffff 100%)"></div>
<div style="position:absolute;left:1320px;top:548px;width:495px;height:34px;background-color:#c0c0c0;background-image:linear-gradient(45deg,#808080 25%,transparent 25%,transparent 75%,#808080 75%),linear-gradient(45deg,#808080 25%,transparent 25%,transparent 75%,#808080 75%);background-size:16px 16px;background-position:0 0,8px 8px"></div>
<div style="position:absolute;left:1320px;top:548px;width:495px;height:34px;background:linear-gradient(90deg,rgba(245,236,112,0),rgba(245,236,112,1))"></div>
<svg style="position:absolute;left:1300px;top:420px;" width="560" height="180" viewBox="0 0 560 180"><path d="M444 52L454 52L449 57Z" fill="#fff" stroke="#333" stroke-width="0.9"/><path d="M444 87L454 87L449 82Z" fill="#fff" stroke="#333" stroke-width="0.9"/><path d="M360 90L370 90L365 95Z" fill="#fff" stroke="#333" stroke-width="0.9"/><path d="M360 124L370 124L365 119Z" fill="#fff" stroke="#333" stroke-width="0.9"/><path d="M509 128L514 131V128Z" fill="#333"/><path d="M509 162L514 159V162Z" fill="#333"/></svg>
<div style="position:absolute;left:1819px;top:434px;width:71px;height:32px;background:#fff;border:1px solid #8b7f73;border-radius:5px"></div>
<div style="position:absolute;left:1856px;top:435px;width:1px;height:32px;background:#dcd8d4"></div>
<div style="position:absolute;left:1874px;top:435px;width:1px;height:32px;background:#dcd8d4"></div>
<div style="position:absolute;left:1828px;top:443.5px;font-size:13px;line-height:15px;color:#2e3436;white-space:nowrap;">56</div>
<svg style="position:absolute;left:1858.0px;top:444.0px;" width="14" height="14" viewBox="0 0 14 14"><path d="M0 7H14" stroke="#2e3436" stroke-width="1.6"/></svg>
<svg style="position:absolute;left:1876.0px;top:444.0px;" width="14" height="14" viewBox="0 0 14 14"><path d="M0 7H14M7 0V14" stroke="#2e3436" stroke-width="1.6"/></svg>
<div style="position:absolute;left:1819px;top:472px;width:71px;height:32px;background:#fff;border:1px solid #8b7f73;border-radius:5px"></div>
<div style="position:absolute;left:1856px;top:473px;width:1px;height:32px;background:#dcd8d4"></div>
<div style="position:absolute;left:1874px;top:473px;width:1px;height:32px;background:#dcd8d4"></div>
<div style="position:absolute;left:1828px;top:481.5px;font-size:13px;line-height:15px;color:#2e3436;white-space:nowrap;">87</div>
<svg style="position:absolute;left:1858.0px;top:482.0px;" width="14" height="14" viewBox="0 0 14 14"><path d="M0 7H14" stroke="#2e3436" stroke-width="1.6"/></svg>
<svg style="position:absolute;left:1876.0px;top:482.0px;" width="14" height="14" viewBox="0 0 14 14"><path d="M0 7H14M7 0V14" stroke="#2e3436" stroke-width="1.6"/></svg>
<div style="position:absolute;left:1819px;top:510px;width:71px;height:32px;background:#fff;border:1px solid #8b7f73;border-radius:5px"></div>
<div style="position:absolute;left:1856px;top:511px;width:1px;height:32px;background:#dcd8d4"></div>
<div style="position:absolute;left:1874px;top:511px;width:1px;height:32px;background:#dcd8d4"></div>
<div style="position:absolute;left:1828px;top:519.5px;font-size:13px;line-height:15px;color:#2e3436;white-space:nowrap;">70</div>
<svg style="position:absolute;left:1858.0px;top:520.0px;" width="14" height="14" viewBox="0 0 14 14"><path d="M0 7H14" stroke="#2e3436" stroke-width="1.6"/></svg>
<svg style="position:absolute;left:1876.0px;top:520.0px;" width="14" height="14" viewBox="0 0 14 14"><path d="M0 7H14M7 0V14" stroke="#2e3436" stroke-width="1.6"/></svg>
<div style="position:absolute;left:1819px;top:548px;width:71px;height:32px;background:#fff;border:1px solid #8b7f73;border-radius:5px"></div>
<div style="position:absolute;left:1856px;top:549px;width:1px;height:32px;background:#dcd8d4"></div>
<div style="position:absolute;left:1874px;top:549px;width:1px;height:32px;background:#dcd8d4"></div>
<div style="position:absolute;left:1828px;top:557.5px;font-size:13px;line-height:15px;color:#2e3436;white-space:nowrap;">100</div>
<svg style="position:absolute;left:1858.0px;top:558.0px;" width="14" height="14" viewBox="0 0 14 14"><path d="M0 7H14" stroke="#2e3436" stroke-width="1.6"/></svg>
<svg style="position:absolute;left:1876.0px;top:558.0px;" width="14" height="14" viewBox="0 0 14 14"><path d="M0 7H14M7 0V14" stroke="#cfcfcf" stroke-width="1.6"/></svg>
<div style="position:absolute;left:1225px;top:700px;width:72px;height:113px;background:#fff;border:1px solid #8b7f73;border-bottom:1px solid #8b7f73;border-top:none;box-sizing:border-box"></div>
<svg style="position:absolute;left:1226px;top:700px;overflow:hidden" width="70" height="112" viewBox="0 0 70 112"><circle cx="35" cy="39.6" r="14.5" fill="#d1b84a"/><circle cx="35" cy="72" r="14.5" fill="#b99832"/><circle cx="35" cy="103.5" r="14.5" fill="#8a6b1a"/></svg>
<svg style="position:absolute;left:1235px;top:822px;" width="16" height="16" viewBox="0 0 16 16"><path d="M1 8H15M8 1V15" stroke="#2e3436" stroke-width="1.8"/></svg>
<svg style="position:absolute;left:1271px;top:822px;" width="16" height="16" viewBox="0 0 16 16"><path d="M1 8H15" stroke="#2e3436" stroke-width="1.8"/></svg>
<svg style="position:absolute;left:1300px;top:822px;" width="16" height="16" viewBox="0 0 16 16"><defs><linearGradient id="tr" x1="0" y1="0" x2="1" y2="1"><stop offset="0" stop-color="#cfe8c8"/><stop offset="0.5" stop-color="#e6d8f4"/><stop offset="1" stop-color="#f8c8d8"/></linearGradient></defs><path d="M2 1L14 11L4 15Z" fill="url(#tr)"/></svg>
<svg style="position:absolute;left:1321px;top:822px;" width="16" height="16" viewBox="0 0 16 16"><circle cx="8" cy="8" r="6" fill="none" stroke="#f8c8cc" stroke-width="4"/></svg>
<svg style="position:absolute;left:1351px;top:820px;" width="18" height="18" viewBox="0 0 18 18"><path d="M12 2Q14 0 16 2Q18 4 16 6L15 7L11 3Z" fill="#111"/><path d="M10 4L14 8" stroke="#111" stroke-width="1.6"/><path d="M11.5 6L4 13.5L3 16L5 17L7 15L13.5 8Z" fill="#b8cce8" stroke="#333" stroke-width="0.8"/></svg>
<div style="position:absolute;left:1778px;top:823px;font-size:13px;line-height:15px;color:#2e3436;white-space:nowrap;letter-spacing:-0.3px">RGBA:</div>
<div style="position:absolute;left:1819px;top:813px;width:74px;height:34px;background:#fff;border:1px solid #8b7f73;border-radius:5px;box-sizing:border-box"></div>
<div style="position:absolute;left:1828px;top:822px;font-size:13px;line-height:15px;color:#2e3436;white-space:nowrap;;letter-spacing:0.3px">f5ec70ff</div>
<div style="position:absolute;left:1619px;top:866px;font-size:13px;line-height:15px;color:#2e3436;white-space:nowrap;;letter-spacing:0.3px">Mischmodus:</div>
<div style="position:absolute;left:1699px;top:857px;width:199px;height:33px;background:linear-gradient(#fafaf9,#f1f0ee);border:1px solid #8b7f73;border-radius:6px;box-sizing:border-box"></div>
<div style="position:absolute;left:1711px;top:866px;font-size:13px;line-height:15px;color:#2e3436;white-space:nowrap;;letter-spacing:0.3px">Normal</div>
<svg style="position:absolute;left:1872px;top:869px;" width="14" height="8" viewBox="0 0 14 8"><path d="M0 0H13L6.5 7Z" fill="#2e3436"/></svg>
<div style="position:absolute;left:1221px;top:894px;width:675px;height:31px;background:#fff;border:1px solid #8b7f73;border-radius:5px;box-sizing:border-box"></div>
<div style="position:absolute;left:1222px;top:895px;width:601px;height:29px;background:#e2dfdb;border-radius:4px 0 0 4px"></div>
<div style="position:absolute;left:1222px;top:896px;width:3px;height:27px;background:#1b6acb"></div>
<div style="position:absolute;left:1823px;top:895px;width:1px;height:29px;background:#8b7f73"></div>
<div style="position:absolute;left:1225px;top:902px;font-size:13px;line-height:15px;color:#2e3436;white-space:nowrap;;letter-spacing:0.3px">Unschärfe (%)</div>
<div style="position:absolute;left:1861px;top:895px;width:1px;height:29px;background:#dcd8d4"></div>
<div style="position:absolute;left:1878px;top:895px;width:1px;height:29px;background:#dcd8d4"></div>
<div style="position:absolute;left:1830px;top:902px;font-size:13px;line-height:15px;color:#2e3436;white-space:nowrap;">0,0</div>
<svg style="position:absolute;left:1863px;top:902px;" width="14" height="14" viewBox="0 0 14 14"><path d="M0 7H14" stroke="#d8d8d8" stroke-width="1.6"/></svg>
<svg style="position:absolute;left:1880px;top:902px;" width="14" height="14" viewBox="0 0 14 14"><path d="M0 7H14M7 0V14" stroke="#2e3436" stroke-width="1.6"/></svg>
<div style="position:absolute;left:1221px;top:930px;width:675px;height:31px;background:#fff;border:1px solid #8b7f73;border-radius:5px;box-sizing:border-box"></div>
<div style="position:absolute;left:1222px;top:931px;width:600px;height:29px;background:#3584e4;border-radius:4px 0 0 4px;border-right:1px solid #1b5fb8;box-sizing:border-box"></div>
<div style="position:absolute;left:1823px;top:931px;width:1px;height:29px;background:#8b7f73"></div>
<div style="position:absolute;left:1225px;top:938px;font-size:13px;line-height:15px;color:#ffffff;white-space:nowrap;;letter-spacing:0.3px">Deckkraft (%)</div>
<div style="position:absolute;left:1861px;top:931px;width:1px;height:29px;background:#dcd8d4"></div>
<div style="position:absolute;left:1878px;top:931px;width:1px;height:29px;background:#dcd8d4"></div>
<div style="position:absolute;left:1829px;top:938px;font-size:13px;line-height:15px;color:#2e3436;white-space:nowrap;letter-spacing:-0.4px">100,0</div>
<svg style="position:absolute;left:1863px;top:938px;" width="14" height="14" viewBox="0 0 14 14"><path d="M0 7H14" stroke="#2e3436" stroke-width="1.6"/></svg>
<svg style="position:absolute;left:1880px;top:938px;" width="14" height="14" viewBox="0 0 14 14"><path d="M0 7H14M7 0V14" stroke="#d8d8d8" stroke-width="1.6"/></svg>
<div style="position:absolute;left:1161px;top:308px;width:335px;height:415px;background:#f6f5f4;border:1px solid #a89e94;border-radius:9px;box-sizing:border-box;box-shadow:0 1px 3px rgba(0,0,0,0.15)"></div>
<svg style="position:absolute;left:1315px;top:296px;" width="26" height="14" viewBox="0 0 26 14"><path d="M0 13L13 0.5L26 13" fill="#f6f5f4" stroke="#a89e94" stroke-width="1"/><rect x="1" y="12.5" width="24" height="2" fill="#f6f5f4"/></svg>
<div style="position:absolute;left:1168px;top:317px;width:320px;height:362px;background:#fff;border:1px solid #8b7f73;box-sizing:border-box"></div>
<div style="position:absolute;left:1169px;top:342px;width:318px;height:1px;background:#8b7f73"></div>
<div style="position:absolute;left:1332px;top:318px;width:1px;height:24px;background:#8b7f73"></div>
<div style="position:absolute;left:1452px;top:318px;width:1px;height:24px;background:#8b7f73"></div>
<div style="position:absolute;left:1175px;top:323px;font-size:13px;line-height:15px;color:#8e9398;white-space:nowrap;font-weight:bold;letter-spacing:0.3px">Farbverlauf</div>
<div style="position:absolute;left:1339px;top:323px;font-size:13px;line-height:15px;color:#8e9398;white-space:nowrap;font-weight:bold;letter-spacing:0.3px">Name</div>
<div style="position:absolute;left:1458px;top:323px;font-size:13px;line-height:15px;color:#8e9398;white-space:nowrap;font-weight:bold">#</div>
<div style="position:absolute;left:1472px;top:343px;width:15px;height:335px;background:#d9d6d3;border-left:1px solid #cfcbc7;box-sizing:border-box"></div>
<div style="position:absolute;left:1476px;top:465px;width:8px;height:60px;background:#7d8281;border-radius:4px"></div>
<div style="position:absolute;left:1171px;top:349px;width:160px;height:20px;background:linear-gradient(90deg,#5aa87a 0%,#80e8d8 10.3%,#3a5868 10.5%,#3a4058 16%,#6a5898 16.1%,#2a1838 32%,#7a1808 32.1%,#300818 62%,#6a5090 62.1%,#2a1838 72%,#6a5090 72.1%,#3a2040 84%,#7a1808 84.1%,#7a1808 86.5%,#f6f66e 86.6%,#f6f66e 90.4%,#2a1838 90.5%,#4a6878 100%)"></div>
<div style="position:absolute;left:1338px;top:353px;font-size:13px;line-height:15px;color:#2e3436;white-space:nowrap;">12473</div>
<div style="position:absolute;left:1456px;top:353px;font-size:13px;line-height:15px;color:#2e3436;white-space:nowrap;">0</div>
<div style="position:absolute;left:1171px;top:374px;width:160px;height:20px;background:linear-gradient(90deg,#0e121a 0%,#50565e 22%,#6e5a50 33%,#4a6080 42%,#8898c0 57%,#e8e0c8 75%,#d8d8d8 88%,#9aa0b0 100%)"></div>
<div style="position:absolute;left:1338px;top:378px;font-size:13px;line-height:15px;color:#2e3436;white-space:nowrap;">12363</div>
<div style="position:absolute;left:1456px;top:378px;font-size:13px;line-height:15px;color:#2e3436;white-space:nowrap;">0</div>
<div style="position:absolute;left:1171px;top:399px;width:160px;height:20px;background:linear-gradient(90deg,#f8f8f8 0%,#999 17%,#1a7a1a 27%,#88bb33 38.5%,#f8f830 39.2%,#a0b0c8 40.5%,#90a0ff 46%,#4a58cc 52%,#0a1aa0 100%)"></div>
<div style="position:absolute;left:1338px;top:403px;font-size:13px;line-height:15px;color:#2e3436;white-space:nowrap;">12309</div>
<div style="position:absolute;left:1456px;top:403px;font-size:13px;line-height:15px;color:#2e3436;white-space:nowrap;">0</div>
<div style="position:absolute;left:1171px;top:424px;width:160px;height:20px;background:linear-gradient(90deg,#1a5a98 0%,#5a8cb8 30%,#f0f0f0 54%,#4a2010 54.2%,#60b070 61%,#2a7a38 75%,#0a5a1a 94%,#1a7a28 100%)"></div>
<div style="position:absolute;left:1338px;top:428px;font-size:13px;line-height:15px;color:#2e3436;white-space:nowrap;">12268</div>
<div style="position:absolute;left:1456px;top:428px;font-size:13px;line-height:15px;color:#2e3436;white-space:nowrap;">0</div>
<div style="position:absolute;left:1171px;top:449px;width:160px;height:20px;background:linear-gradient(90deg,#000 0%,#200000 15%,#500000 45%,#b00000 60%,#f88030 80%,#f8e818 90%,#f8f0c0 100%)"></div>
<div style="position:absolute;left:1338px;top:453px;font-size:13px;line-height:15px;color:#2e3436;white-space:nowrap;">12230</div>
<div style="position:absolute;left:1456px;top:453px;font-size:13px;line-height:15px;color:#2e3436;white-space:nowrap;">0</div>
<div style="position:absolute;left:1171px;top:474px;width:160px;height:20px;background:linear-gradient(90deg,#1a5a98 0%,#2a78b0 30%,#f8f8f8 54%,#0a2a58 54.2%,#78c8f0 61%,#4a7898 75%,#182848 100%)"></div>
<div style="position:absolute;left:1338px;top:478px;font-size:13px;line-height:15px;color:#2e3436;white-space:nowrap;">12192</div>
<div style="position:absolute;left:1456px;top:478px;font-size:13px;line-height:15px;color:#2e3436;white-space:nowrap;">0</div>
<div style="position:absolute;left:1171px;top:499px;width:160px;height:20px;background:linear-gradient(90deg,#1a5a98 0%,#6a98c0 30%,#f8f8f8 54%,#4a2810 54.2%,#f8c888 61%,#905830 80%,#502810 94%,#f88830 100%)"></div>
<div style="position:absolute;left:1338px;top:503px;font-size:13px;line-height:15px;color:#2e3436;white-space:nowrap;">12151</div>
<div style="position:absolute;left:1456px;top:503px;font-size:13px;line-height:15px;color:#2e3436;white-space:nowrap;">0</div>
<div style="position:absolute;left:1171px;top:524px;width:160px;height:20px;background:linear-gradient(90deg,#2a5a20 0%,#3a6a30 10%,#6a9a48 25%,#4a6a18 38%,#1a2218 50%,#383838 58%,#4a3838 65%,#6aa858 76%,#586850 83%,#1a4a10 100%)"></div>
<div style="position:absolute;left:1338px;top:528px;font-size:13px;line-height:15px;color:#2e3436;white-space:nowrap;">12103</div>
<div style="position:absolute;left:1456px;top:528px;font-size:13px;line-height:15px;color:#2e3436;white-space:nowrap;">0</div>
<div style="position:absolute;left:1169px;top:547px;width:303px;height:25px;background:#1c6ad0"></div>
<div style="position:absolute;left:1472px;top:547px;width:15px;height:25px;background:#a9bedb"></div>
<div style="position:absolute;left:1171px;top:549px;width:160px;height:20px;background:linear-gradient(90deg,#2a2a08 0%,#7a6018 12%,#c0a840 25%,#f5ec70 41%,#d6be4c 52%,#a88a2a 63%,#d8c858 75%,#b89830 88%,#2a2a10 100%)"></div>
<div style="position:absolute;left:1174px;top:552px;width:154px;height:14px;border:1px dashed rgba(255,255,240,0.6);border-radius:3px;box-sizing:border-box"></div>
<div style="position:absolute;left:1338px;top:553px;font-size:13px;line-height:15px;color:#ffffff;white-space:nowrap;">12033</div>
<div style="position:absolute;left:1456px;top:553px;font-size:13px;line-height:15px;color:#ffffff;white-space:nowrap;">1</div>
<div style="position:absolute;left:1171px;top:574px;width:160px;height:20px;background:#ff0000"></div>
<div style="position:absolute;left:1338px;top:578px;font-size:13px;line-height:15px;color:#2e3436;white-space:nowrap;">11964</div>
<div style="position:absolute;left:1456px;top:578px;font-size:13px;line-height:15px;color:#2e3436;white-space:nowrap;">0</div>
<div style="position:absolute;left:1171px;top:599px;width:160px;height:20px;background:linear-gradient(90deg,#111 0%,#fff 12%,#ddd 13%,#000 25%,#fff 37%,#eee 38%,#000 50%,#fff 62%,#eee 63%,#000 75%,#ddd 87%,#111 100%)"></div>
<div style="position:absolute;left:1338px;top:603px;font-size:13px;line-height:15px;color:#2e3436;white-space:nowrap;">11942</div>
<div style="position:absolute;left:1456px;top:603px;font-size:13px;line-height:15px;color:#2e3436;white-space:nowrap;">0</div>
<div style="position:absolute;left:1171px;top:624px;width:160px;height:20px;background:linear-gradient(90deg,#555 0%,#aaa 50%,#fff 100%)"></div>
<div style="position:absolute;left:1338px;top:628px;font-size:13px;line-height:15px;color:#2e3436;white-space:nowrap;">11913</div>
<div style="position:absolute;left:1456px;top:628px;font-size:13px;line-height:15px;color:#2e3436;white-space:nowrap;">0</div>
<div style="position:absolute;left:1171px;top:649px;width:160px;height:20px;background:linear-gradient(90deg,#eee 0%,#333 6%,#999 14.5%,#ccc 15%,#fff 24%,#eee 25%,#888 33%,#bbb 42%,#fff 49%,#666 51%,#444 57%,#bbb 62%,#777 73%,#fff 76%,#111 85%,#fff 100%)"></div>
<div style="position:absolute;left:1338px;top:653px;font-size:13px;line-height:15px;color:#2e3436;white-space:nowrap;">11873</div>
<div style="position:absolute;left:1456px;top:653px;font-size:13px;line-height:15px;color:#2e3436;white-space:nowrap;">0</div>
<div style="position:absolute;left:1171px;top:674px;width:160px;height:4px;background:linear-gradient(90deg,#bbb,#ccc 40%,#e8a0a0 50%,#ccc 70%,#bbb)"></div>
<div style="position:absolute;left:1171px;top:343px;width:160px;height:2px;background:linear-gradient(90deg,#9aa8a8,#7a8c90 40%,#40e0d8 75%,#b0c0c0 100%)"></div>
<svg style="position:absolute;left:1178px;top:692px;" width="16" height="16" viewBox="0 0 16 16"><path d="M1 8H15M8 1V15" stroke="#2e3436" stroke-width="1.8"/></svg>
<svg style="position:absolute;left:1214px;top:692px;" width="16" height="16" viewBox="0 0 16 16"><path d="M1 8H15" stroke="#2e3436" stroke-width="1.8"/></svg>
<div style="position:absolute;left:0px;top:0px;width:2px;height:109px;background:#d0d0d0"></div>
<div style="position:absolute;left:2px;top:0px;width:1px;height:109px;background:#8a8a8a"></div>
<div style="position:absolute;left:0px;top:109px;width:3px;height:881px;background:#243452"></div>
<div style="position:absolute;left:1906px;top:0px;width:1px;height:109px;background:#6a6a6a"></div>
<div style="position:absolute;left:1907px;top:0px;width:1px;height:109px;background:#d0d0d0"></div>
<div style="position:absolute;left:1906px;top:109px;width:2px;height:881px;background:#1c2333"></div>
</body></html>
